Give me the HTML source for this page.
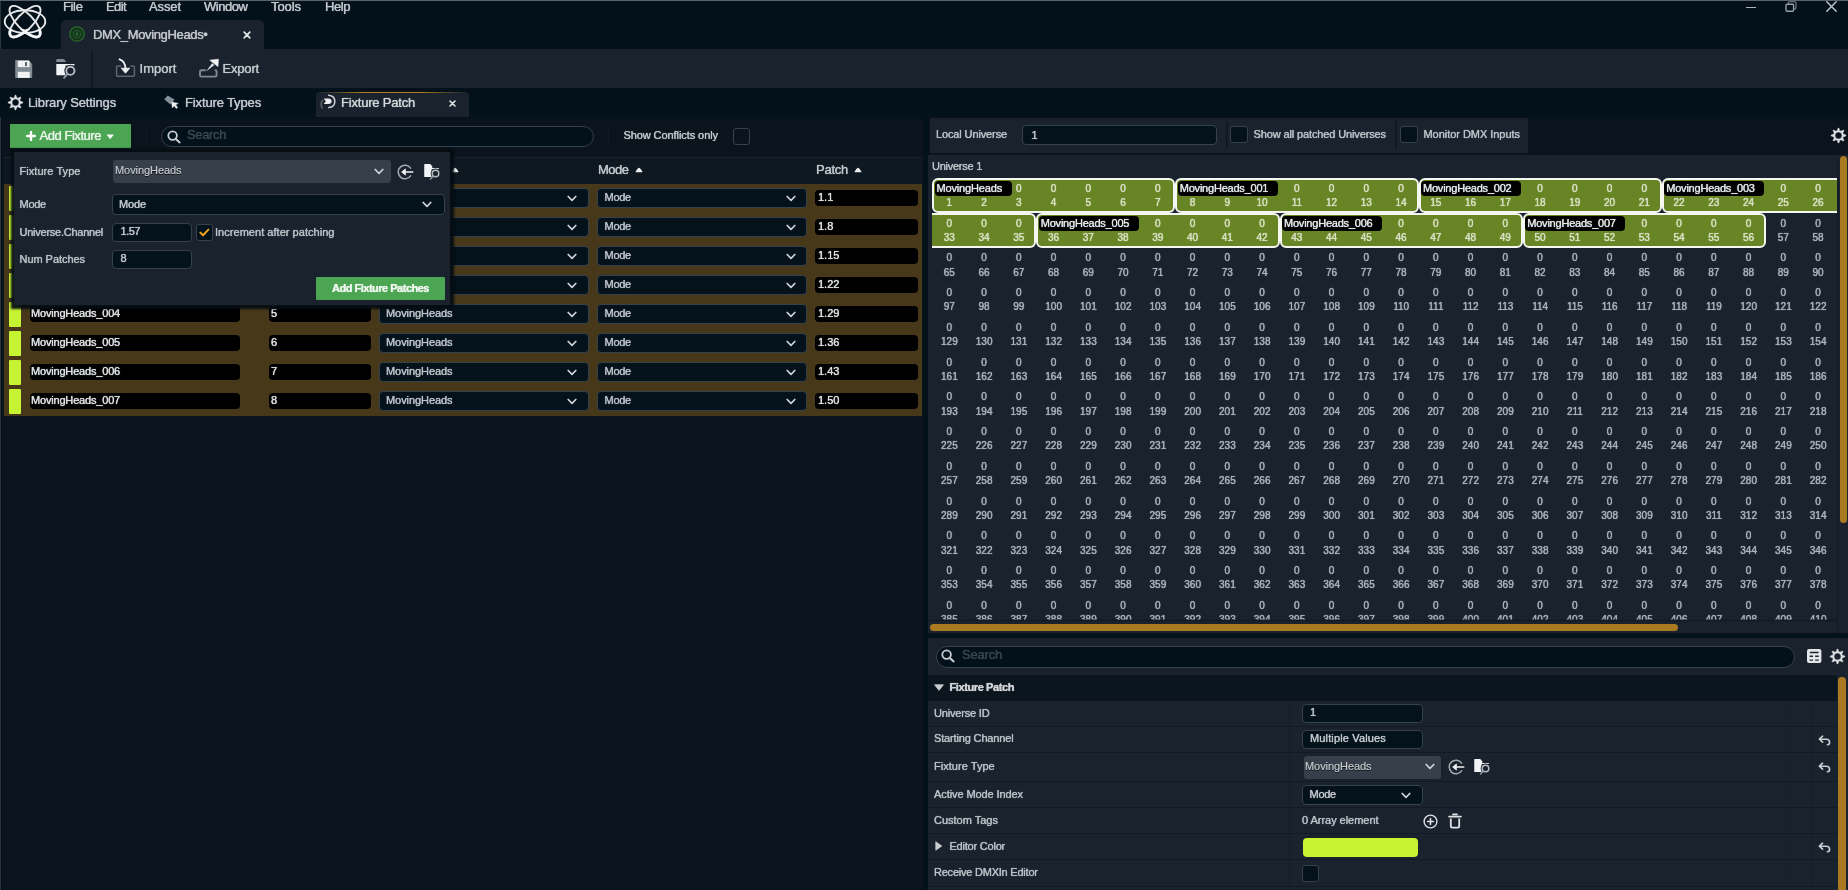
<!DOCTYPE html>
<html><head><meta charset="utf-8"><title>DMX_MovingHeads</title>
<style>
html,body{margin:0;padding:0;background:#03111a;}
body{width:1848px;height:890px;position:relative;overflow:hidden;font-family:'Liberation Sans',sans-serif;}
div,svg,span{position:absolute;}
.t{white-space:pre;line-height:1;-webkit-text-stroke:.15px currentColor;text-shadow:0 0 .9px currentColor;}
.g{width:30px;text-align:center;font-size:10px;line-height:1;letter-spacing:0;white-space:pre;-webkit-text-stroke:.2px currentColor;text-shadow:0 0 1px currentColor;}
#blur{left:0;top:0;width:1848px;height:890px;will-change:transform;}
</style></head><body><div id="blur">
<div style="left:0px;top:0px;width:1848px;height:49px;background:#03111a"></div><div style="left:0px;top:0px;width:1848px;height:1px;background:#5b646c"></div><div style="left:0px;top:1px;width:1px;height:889px;background:#2a343d"></div><svg style="left:0px;top:0px;" width="52" height="44" viewBox="0 0 52 44"><defs><clipPath id="lg"><rect x="0" y="29" width="52" height="15"/></clipPath></defs><g fill="none" stroke="#e6e8ea" stroke-width="1.9"><ellipse cx="25" cy="21.6" rx="20.3" ry="11.4"/><ellipse cx="25" cy="21.6" rx="20.5" ry="8" transform="rotate(45.5 25 21.6)"/><ellipse cx="25" cy="21.6" rx="20.5" ry="8" transform="rotate(-45.5 25 21.6)"/></g><g fill="none" stroke="#f4f5f6" stroke-width="2.9" clip-path="url(#lg)"><ellipse cx="25" cy="21.6" rx="20.2" ry="7.6" transform="rotate(45.5 25 21.6)"/><ellipse cx="25" cy="21.6" rx="20.2" ry="7.6" transform="rotate(-45.5 25 21.6)"/></g></svg><span class="t" style="left:63.00px;top:0.00px;font-size:13px;color:#c3c8cd;letter-spacing:-0.363px;">File</span><span class="t" style="left:106.00px;top:0.00px;font-size:13px;color:#c3c8cd;letter-spacing:-0.602px;">Edit</span><span class="t" style="left:149.00px;top:0.00px;font-size:13px;color:#c3c8cd;letter-spacing:-0.103px;">Asset</span><span class="t" style="left:204.00px;top:0.00px;font-size:13px;color:#c3c8cd;letter-spacing:-0.458px;">Window</span><span class="t" style="left:271.00px;top:0.00px;font-size:13px;color:#c3c8cd;letter-spacing:-0.072px;">Tools</span><span class="t" style="left:325.00px;top:0.00px;font-size:13px;color:#c3c8cd;letter-spacing:-0.438px;">Help</span><div style="left:61px;top:20px;width:203px;height:29px;background:#1a232d;border-radius:5px 5px 0 0"></div><svg style="left:69px;top:26px;" width="16" height="16" viewBox="0 0 16 16"><circle cx="8" cy="8" r="7.2" fill="#16341b" stroke="#276a2c" stroke-width="1.3"/><path d="M8 4.4 L10.4 10.4 L8 9 L5.6 10.4 Z" fill="#24602a"/><circle cx="8" cy="8" r="3.8" fill="none" stroke="#24602a" stroke-width=".9"/></svg><span class="t" style="left:93.00px;top:28.00px;font-size:13px;color:#c3c8cd;letter-spacing:-0.354px;">DMX_MovingHeads•</span><svg style="left:243px;top:31px;" width="8" height="8" viewBox="0 0 8 8"><path d="M1.2 1.2 L6.8 6.8 M6.8 1.2 L1.2 6.8" stroke="#e2e5e8" stroke-width="1.7" stroke-linecap="round"/></svg><div style="left:1745.8px;top:6.7px;width:10.2px;height:1.4px;background:#aab1b8"></div><svg style="left:1785px;top:1px;" width="12" height="11" viewBox="0 0 12 11"><path d="M3.2 3 V1.8 Q3.2 .8 4.2 .8 H10 Q11 .8 11 1.8 V7 Q11 8 10 8 H9" fill="none" stroke="#7d868e" stroke-width="1.1"/><rect x="1" y="3.2" width="7.6" height="7" rx="1.2" fill="none" stroke="#98a0a7" stroke-width="1.4"/></svg><svg style="left:1826.3px;top:1.2px;" width="11" height="11" viewBox="0 0 11 11"><path d="M.8 .8 L10.2 10.2 M10.2 .8 L.8 10.2" stroke="#bcc2c8" stroke-width="1.5" stroke-linecap="round"/></svg><div style="left:0px;top:49px;width:1848px;height:39px;background:#1a232d"></div><svg style="left:15px;top:59.5px;" width="18" height="18" viewBox="0 0 18 18"><path d="M.2 .9 Q.2 .1 1 .1 H13.4 L17.2 3.9 V17 Q17.2 17.9 16.4 17.9 H1 Q.2 17.9 .2 17 Z" fill="#808a93"/><rect x="2.8" y=".8" width="11.8" height="6.3" fill="#f0f2f4"/><rect x="10" y="1.9" width="2.1" height="4.4" rx=".8" fill="#59626b"/><rect x="2.8" y="11.8" width="12" height="6.1" fill="#f0f2f4"/></svg><svg style="left:56.2px;top:59.1px;" width="21.0" height="20.0" viewBox="0 0 21 20"><path d="M.3 .9 Q.3 .1 1.1 .1 H7.4 Q8 .1 8.5 .7 L10.3 3 V3 H.3 Z" fill="#828b94"/><path d="M.3 4.9 H18.5 V6.4 H9.6 V16.3 H1.1 Q.3 16.3 .3 15.5 Z" fill="#f2f4f6"/><circle cx="14.4" cy="11.8" r="6.1" fill="#1a232d"/><circle cx="14.4" cy="11.8" r="4.1" fill="none" stroke="#b4bac0" stroke-width="1.9"/><path d="M11.4 15.3 L8.1 18.9" stroke="#9aa2aa" stroke-width="1.7" stroke-linecap="round"/></svg><div style="left:91px;top:50px;width:2.2px;height:37px;background:#111a22"></div><svg style="left:115px;top:58px;" width="21" height="20" viewBox="0 0 21 20"><path d="M6.2 7.9 H2.6 Q1.6 7.9 1.6 8.9 V17.2 Q1.6 18.2 2.6 18.2 H18.4 Q19.4 18.2 19.4 17.2 V8.9 Q19.4 7.9 18.4 7.9 H15.4" fill="none" stroke="#5d6771" stroke-width="1.5"/><path d="M4.6 1.3 Q10.6 3.6 10.5 11" fill="none" stroke="#eef0f2" stroke-width="1.9" stroke-linecap="round"/><path d="M6.2 10.2 H14.8 L10.5 15.2 Z" fill="#eef0f2" stroke="#eef0f2" stroke-width=".8" stroke-linejoin="round"/></svg><span class="t" style="left:139.50px;top:62.00px;font-size:13px;color:#c3c8cd;letter-spacing:0.026px;">Import</span><svg style="left:198px;top:58px;" width="22" height="21" viewBox="0 0 22 21"><path d="M7 12.3 H3.4 Q2 12.3 2 13.7 V17.2 Q2 18.6 3.4 18.6 H17.2 Q18.6 18.6 18.6 17.2 V13.6 Q18.6 12.3 17.4 12.3" fill="none" stroke="#808a93" stroke-width="1.9" stroke-linecap="round"/><path d="M8 13.6 L14.2 5.2 L16.4 7 Z" fill="#dfe2e5"/><path d="M11.8 2.2 L20.4 1.2 L20 8.6 Z" fill="#f0f2f4" stroke="#f0f2f4" stroke-width=".6" stroke-linejoin="round"/></svg><span class="t" style="left:222.50px;top:62.00px;font-size:13px;color:#c3c8cd;letter-spacing:-0.180px;">Export</span><div style="left:0px;top:88px;width:1848px;height:28.5px;background:#03111a"></div><svg style="left:6.5px;top:94.3px;" width="17" height="17" viewBox="-8.5 -8.5 17 17"><path d="M-1.17 -5.07 L-0.39 -7.39 L0.39 -7.39 L1.17 -5.07 L1.88 -4.53 L2.76 -4.41 L4.95 -5.50 L5.50 -4.95 L4.41 -2.76 L4.53 -1.88 L5.07 -1.17 L7.39 -0.39 L7.39 0.39 L5.07 1.17 L4.53 1.88 L4.41 2.76 L5.50 4.95 L4.95 5.50 L2.76 4.41 L1.88 4.53 L1.17 5.07 L0.39 7.39 L-0.39 7.39 L-1.17 5.07 L-1.88 4.53 L-2.76 4.41 L-4.95 5.50 L-5.50 4.95 L-4.41 2.76 L-4.53 1.88 L-5.07 1.17 L-7.39 0.39 L-7.39 -0.39 L-5.07 -1.17 L-4.53 -1.88 L-4.41 -2.76 L-5.50 -4.95 L-4.95 -5.50 L-2.76 -4.41 L-1.88 -4.53 Z M3.5 0 A3.5 3.5 0 1 0 -3.5 0 A3.5 3.5 0 1 0 3.5 0 Z" fill="#dde0e3" fill-rule="evenodd" stroke="#dde0e3" stroke-width=".5" stroke-linejoin="round"/></svg><span class="t" style="left:28.00px;top:96.00px;font-size:13px;color:#c3c8cd;letter-spacing:-0.146px;">Library Settings</span><svg style="left:163px;top:94px;" width="17" height="16" viewBox="0 0 17 16"><path d="M4.8 1.4 L11.6 5.8 L7.4 10.6 L1.2 5.2 Z" fill="#858e96"/><path d="M8.6 8 L15.2 9.4 L12.6 10.8 L14.6 13.4 L13.2 14.4 L11.2 11.8 L9.4 14 Z" fill="#eef0f2" stroke="#eef0f2" stroke-width=".5" stroke-linejoin="round"/></svg><span class="t" style="left:185.00px;top:96.00px;font-size:13px;color:#c3c8cd;letter-spacing:-0.138px;">Fixture Types</span><div style="left:315.5px;top:92px;width:153px;height:24.5px;background:#1a232d;border-radius:4px 4px 0 0"></div><div style="left:318px;top:92px;width:148px;height:1.3px;background:linear-gradient(90deg,rgba(169,122,31,0),#a97a1f 30%,#a97a1f 70%,rgba(169,122,31,0));"></div><svg style="left:319px;top:93.5px;" width="18" height="16" viewBox="0 0 18 16"><path d="M3.8 6.2 Q.6 9.6 3.2 14" fill="none" stroke="#56606a" stroke-width="1.5" stroke-linecap="round"/><path d="M9.6 1.2 Q15.8 1.8 15.8 7.4 Q15.8 12.8 9.8 13.6" fill="none" stroke="#cdd1d5" stroke-width="1.5" stroke-linecap="round"/><path d="M4.8 4.6 L6.8 7.3 L4.8 10 H9.4 Q12.6 10 12.6 7.3 Q12.6 4.6 9.4 4.6 Z" fill="#eef0f2"/></svg><span class="t" style="left:341.00px;top:96.00px;font-size:13px;color:#d2d6da;letter-spacing:-0.200px;">Fixture Patch</span><svg style="left:448.5px;top:99.5px;" width="7" height="7" viewBox="0 0 7 7"><path d="M1 1 L6 6 M6 1 L1 6" stroke="#e2e5e8" stroke-width="1.6" stroke-linecap="round"/></svg><div style="left:2px;top:116.5px;width:921px;height:773.5px;background:linear-gradient(#03111a,#0b141c 3px)"></div><div style="left:10px;top:124px;width:121px;height:24px;background:#4ba552;border-radius:1px"></div><svg style="left:26px;top:131px;" width="10" height="10" viewBox="0 0 10 10"><path d="M5 1 V9 M1 5 H9" stroke="#fff" stroke-width="2.4" stroke-linecap="round"/></svg><span class="t" style="left:39.50px;top:129.00px;font-size:13px;color:#e9f4ea;letter-spacing:-0.453px;">Add Fixture</span><svg style="left:106px;top:134px;" width="8.4" height="5.4" viewBox="0 0 7 4.5"><path d="M1 .5 H6 Q6.7 .5 6.2 1.1 L4 3.7 Q3.5 4.2 3 3.7 L.8 1.1 Q.3 .5 1 .5 Z" fill="#f2f8f2"/></svg><div style="left:145.5px;top:129px;width:1px;height:15px;background:#121b23"></div><div style="left:161px;top:125.5px;width:432.5px;height:21.5px;background:#03111a;border:1px solid #37414c;border-radius:11px;box-sizing:border-box"></div><svg style="left:166.5px;top:129.5px;" width="14" height="14" viewBox="0 0 14 14"><circle cx="5.6" cy="5.6" r="4.3" fill="none" stroke="#c8ccd0" stroke-width="1.8"/><path d="M8.9 8.9 L12.6 12.4" stroke="#c8ccd0" stroke-width="2" stroke-linecap="round"/></svg><span class="t" style="left:187.00px;top:128.00px;font-size:13px;color:#3b4650;letter-spacing:-0.367px;">Search</span><div style="left:608px;top:129px;width:1px;height:15px;background:#121b23"></div><span class="t" style="left:623.40px;top:130.00px;font-size:11px;color:#c3c8cd;letter-spacing:-0.074px;">Show Conflicts only</span><div style="left:732.5px;top:128px;width:17.5px;height:17px;background:#0b141c;border:1px solid #37414c;border-radius:3px;box-sizing:border-box"></div><div style="left:4px;top:157px;width:918px;height:27px;background:#0e1820;border-top:1px solid #1a232d;box-sizing:border-box"></div><svg style="left:451px;top:167.4px;" width="8" height="5.6" viewBox="0 0 8 5.6"><path d="M.9 5.2 Q.2 5.2 .7 4.5 Q2.2 1.8 3.4 .9 Q4 .4 4.6 .9 Q5.8 1.8 7.3 4.5 Q7.8 5.2 7.1 5.2 Z" fill="#eceef0"/></svg><span class="t" style="left:598.00px;top:163.00px;font-size:13px;color:#c3c8cd;letter-spacing:-0.483px;">Mode</span><svg style="left:634.5px;top:167.4px;" width="8" height="5.6" viewBox="0 0 8 5.6"><path d="M.9 5.2 Q.2 5.2 .7 4.5 Q2.2 1.8 3.4 .9 Q4 .4 4.6 .9 Q5.8 1.8 7.3 4.5 Q7.8 5.2 7.1 5.2 Z" fill="#eceef0"/></svg><span class="t" style="left:816.00px;top:163.00px;font-size:13px;color:#c3c8cd;letter-spacing:-0.250px;">Patch</span><svg style="left:853.5px;top:167.4px;" width="8" height="5.6" viewBox="0 0 8 5.6"><path d="M.9 5.2 Q.2 5.2 .7 4.5 Q2.2 1.8 3.4 .9 Q4 .4 4.6 .9 Q5.8 1.8 7.3 4.5 Q7.8 5.2 7.1 5.2 Z" fill="#eceef0"/></svg><div style="left:4px;top:184px;width:918px;height:232px;background:#463819"></div><div style="left:9px;top:186px;width:12px;height:24.5px;background:#c6f432;border-radius:1px"></div><div style="left:29.5px;top:190px;width:210.5px;height:16px;background:#000;border-radius:4px"></div><div style="left:269px;top:190px;width:102px;height:16px;background:#000;border-radius:4px"></div><div style="left:379px;top:188px;width:210px;height:19.5px;background:#04121b;border:1px solid #37414c;border-radius:4px;box-sizing:border-box"></div><svg style="left:567px;top:194.5px;" width="10" height="7" viewBox="0 0 10 7"><path d="M1.2 1.5 L5 5.3 L8.8 1.5" fill="none" stroke="#d0d4d8" stroke-width="1.7" stroke-linecap="round" stroke-linejoin="round"/></svg><div style="left:597px;top:188px;width:210px;height:19.5px;background:#04121b;border:1px solid #37414c;border-radius:4px;box-sizing:border-box"></div><span class="t" style="left:604.50px;top:192.00px;font-size:11px;color:#bdc3c9;letter-spacing:-0.258px;">Mode</span><svg style="left:785.5px;top:194.5px;" width="10" height="7" viewBox="0 0 10 7"><path d="M1.2 1.5 L5 5.3 L8.8 1.5" fill="none" stroke="#d0d4d8" stroke-width="1.7" stroke-linecap="round" stroke-linejoin="round"/></svg><div style="left:815px;top:190px;width:102.5px;height:15.5px;background:#000;border-radius:4px"></div><span class="t" style="left:818.00px;top:192.00px;font-size:11px;color:#dfe2e5;">1.1</span><div style="left:9px;top:215px;width:12px;height:24.5px;background:#c6f432;border-radius:1px"></div><div style="left:29.5px;top:219px;width:210.5px;height:16px;background:#000;border-radius:4px"></div><div style="left:269px;top:219px;width:102px;height:16px;background:#000;border-radius:4px"></div><div style="left:379px;top:217px;width:210px;height:19.5px;background:#04121b;border:1px solid #37414c;border-radius:4px;box-sizing:border-box"></div><svg style="left:567px;top:223.5px;" width="10" height="7" viewBox="0 0 10 7"><path d="M1.2 1.5 L5 5.3 L8.8 1.5" fill="none" stroke="#d0d4d8" stroke-width="1.7" stroke-linecap="round" stroke-linejoin="round"/></svg><div style="left:597px;top:217px;width:210px;height:19.5px;background:#04121b;border:1px solid #37414c;border-radius:4px;box-sizing:border-box"></div><span class="t" style="left:604.50px;top:221.00px;font-size:11px;color:#bdc3c9;letter-spacing:-0.258px;">Mode</span><svg style="left:785.5px;top:223.5px;" width="10" height="7" viewBox="0 0 10 7"><path d="M1.2 1.5 L5 5.3 L8.8 1.5" fill="none" stroke="#d0d4d8" stroke-width="1.7" stroke-linecap="round" stroke-linejoin="round"/></svg><div style="left:815px;top:219px;width:102.5px;height:15.5px;background:#000;border-radius:4px"></div><span class="t" style="left:818.00px;top:221.00px;font-size:11px;color:#dfe2e5;">1.8</span><div style="left:9px;top:244px;width:12px;height:24.5px;background:#c6f432;border-radius:1px"></div><div style="left:29.5px;top:248px;width:210.5px;height:16px;background:#000;border-radius:4px"></div><div style="left:269px;top:248px;width:102px;height:16px;background:#000;border-radius:4px"></div><div style="left:379px;top:246px;width:210px;height:19.5px;background:#04121b;border:1px solid #37414c;border-radius:4px;box-sizing:border-box"></div><svg style="left:567px;top:252.5px;" width="10" height="7" viewBox="0 0 10 7"><path d="M1.2 1.5 L5 5.3 L8.8 1.5" fill="none" stroke="#d0d4d8" stroke-width="1.7" stroke-linecap="round" stroke-linejoin="round"/></svg><div style="left:597px;top:246px;width:210px;height:19.5px;background:#04121b;border:1px solid #37414c;border-radius:4px;box-sizing:border-box"></div><span class="t" style="left:604.50px;top:250.00px;font-size:11px;color:#bdc3c9;letter-spacing:-0.258px;">Mode</span><svg style="left:785.5px;top:252.5px;" width="10" height="7" viewBox="0 0 10 7"><path d="M1.2 1.5 L5 5.3 L8.8 1.5" fill="none" stroke="#d0d4d8" stroke-width="1.7" stroke-linecap="round" stroke-linejoin="round"/></svg><div style="left:815px;top:248px;width:102.5px;height:15.5px;background:#000;border-radius:4px"></div><span class="t" style="left:818.00px;top:250.00px;font-size:11px;color:#dfe2e5;">1.15</span><div style="left:9px;top:273px;width:12px;height:24.5px;background:#c6f432;border-radius:1px"></div><div style="left:29.5px;top:277px;width:210.5px;height:16px;background:#000;border-radius:4px"></div><div style="left:269px;top:277px;width:102px;height:16px;background:#000;border-radius:4px"></div><div style="left:379px;top:275px;width:210px;height:19.5px;background:#04121b;border:1px solid #37414c;border-radius:4px;box-sizing:border-box"></div><svg style="left:567px;top:281.5px;" width="10" height="7" viewBox="0 0 10 7"><path d="M1.2 1.5 L5 5.3 L8.8 1.5" fill="none" stroke="#d0d4d8" stroke-width="1.7" stroke-linecap="round" stroke-linejoin="round"/></svg><div style="left:597px;top:275px;width:210px;height:19.5px;background:#04121b;border:1px solid #37414c;border-radius:4px;box-sizing:border-box"></div><span class="t" style="left:604.50px;top:279.00px;font-size:11px;color:#bdc3c9;letter-spacing:-0.258px;">Mode</span><svg style="left:785.5px;top:281.5px;" width="10" height="7" viewBox="0 0 10 7"><path d="M1.2 1.5 L5 5.3 L8.8 1.5" fill="none" stroke="#d0d4d8" stroke-width="1.7" stroke-linecap="round" stroke-linejoin="round"/></svg><div style="left:815px;top:277px;width:102.5px;height:15.5px;background:#000;border-radius:4px"></div><span class="t" style="left:818.00px;top:279.00px;font-size:11px;color:#dfe2e5;">1.22</span><div style="left:9px;top:302px;width:12px;height:24.5px;background:#c6f432;border-radius:1px"></div><div style="left:29.5px;top:306px;width:210.5px;height:16px;background:#000;border-radius:4px"></div><span class="t" style="left:31.00px;top:308.00px;font-size:11px;color:#dfe2e5;letter-spacing:-0.182px;">MovingHeads_004</span><div style="left:269px;top:306px;width:102px;height:16px;background:#000;border-radius:4px"></div><span class="t" style="left:271.00px;top:308.00px;font-size:11px;color:#dfe2e5;">5</span><div style="left:379px;top:304px;width:210px;height:19.5px;background:#04121b;border:1px solid #37414c;border-radius:4px;box-sizing:border-box"></div><span class="t" style="left:386.00px;top:308.00px;font-size:11px;color:#bdc3c9;letter-spacing:-0.070px;">MovingHeads</span><svg style="left:567px;top:310.5px;" width="10" height="7" viewBox="0 0 10 7"><path d="M1.2 1.5 L5 5.3 L8.8 1.5" fill="none" stroke="#d0d4d8" stroke-width="1.7" stroke-linecap="round" stroke-linejoin="round"/></svg><div style="left:597px;top:304px;width:210px;height:19.5px;background:#04121b;border:1px solid #37414c;border-radius:4px;box-sizing:border-box"></div><span class="t" style="left:604.50px;top:308.00px;font-size:11px;color:#bdc3c9;letter-spacing:-0.258px;">Mode</span><svg style="left:785.5px;top:310.5px;" width="10" height="7" viewBox="0 0 10 7"><path d="M1.2 1.5 L5 5.3 L8.8 1.5" fill="none" stroke="#d0d4d8" stroke-width="1.7" stroke-linecap="round" stroke-linejoin="round"/></svg><div style="left:815px;top:306px;width:102.5px;height:15.5px;background:#000;border-radius:4px"></div><span class="t" style="left:818.00px;top:308.00px;font-size:11px;color:#dfe2e5;">1.29</span><div style="left:9px;top:331px;width:12px;height:24.5px;background:#c6f432;border-radius:1px"></div><div style="left:29.5px;top:335px;width:210.5px;height:16px;background:#000;border-radius:4px"></div><span class="t" style="left:31.00px;top:337.00px;font-size:11px;color:#dfe2e5;letter-spacing:-0.182px;">MovingHeads_005</span><div style="left:269px;top:335px;width:102px;height:16px;background:#000;border-radius:4px"></div><span class="t" style="left:271.00px;top:337.00px;font-size:11px;color:#dfe2e5;">6</span><div style="left:379px;top:333px;width:210px;height:19.5px;background:#04121b;border:1px solid #37414c;border-radius:4px;box-sizing:border-box"></div><span class="t" style="left:386.00px;top:337.00px;font-size:11px;color:#bdc3c9;letter-spacing:-0.070px;">MovingHeads</span><svg style="left:567px;top:339.5px;" width="10" height="7" viewBox="0 0 10 7"><path d="M1.2 1.5 L5 5.3 L8.8 1.5" fill="none" stroke="#d0d4d8" stroke-width="1.7" stroke-linecap="round" stroke-linejoin="round"/></svg><div style="left:597px;top:333px;width:210px;height:19.5px;background:#04121b;border:1px solid #37414c;border-radius:4px;box-sizing:border-box"></div><span class="t" style="left:604.50px;top:337.00px;font-size:11px;color:#bdc3c9;letter-spacing:-0.258px;">Mode</span><svg style="left:785.5px;top:339.5px;" width="10" height="7" viewBox="0 0 10 7"><path d="M1.2 1.5 L5 5.3 L8.8 1.5" fill="none" stroke="#d0d4d8" stroke-width="1.7" stroke-linecap="round" stroke-linejoin="round"/></svg><div style="left:815px;top:335px;width:102.5px;height:15.5px;background:#000;border-radius:4px"></div><span class="t" style="left:818.00px;top:337.00px;font-size:11px;color:#dfe2e5;">1.36</span><div style="left:9px;top:360px;width:12px;height:24.5px;background:#c6f432;border-radius:1px"></div><div style="left:29.5px;top:364px;width:210.5px;height:16px;background:#000;border-radius:4px"></div><span class="t" style="left:31.00px;top:366.00px;font-size:11px;color:#dfe2e5;letter-spacing:-0.182px;">MovingHeads_006</span><div style="left:269px;top:364px;width:102px;height:16px;background:#000;border-radius:4px"></div><span class="t" style="left:271.00px;top:366.00px;font-size:11px;color:#dfe2e5;">7</span><div style="left:379px;top:362px;width:210px;height:19.5px;background:#04121b;border:1px solid #37414c;border-radius:4px;box-sizing:border-box"></div><span class="t" style="left:386.00px;top:366.00px;font-size:11px;color:#bdc3c9;letter-spacing:-0.070px;">MovingHeads</span><svg style="left:567px;top:368.5px;" width="10" height="7" viewBox="0 0 10 7"><path d="M1.2 1.5 L5 5.3 L8.8 1.5" fill="none" stroke="#d0d4d8" stroke-width="1.7" stroke-linecap="round" stroke-linejoin="round"/></svg><div style="left:597px;top:362px;width:210px;height:19.5px;background:#04121b;border:1px solid #37414c;border-radius:4px;box-sizing:border-box"></div><span class="t" style="left:604.50px;top:366.00px;font-size:11px;color:#bdc3c9;letter-spacing:-0.258px;">Mode</span><svg style="left:785.5px;top:368.5px;" width="10" height="7" viewBox="0 0 10 7"><path d="M1.2 1.5 L5 5.3 L8.8 1.5" fill="none" stroke="#d0d4d8" stroke-width="1.7" stroke-linecap="round" stroke-linejoin="round"/></svg><div style="left:815px;top:364px;width:102.5px;height:15.5px;background:#000;border-radius:4px"></div><span class="t" style="left:818.00px;top:366.00px;font-size:11px;color:#dfe2e5;">1.43</span><div style="left:9px;top:389px;width:12px;height:24.5px;background:#c6f432;border-radius:1px"></div><div style="left:29.5px;top:393px;width:210.5px;height:16px;background:#000;border-radius:4px"></div><span class="t" style="left:31.00px;top:395.00px;font-size:11px;color:#dfe2e5;letter-spacing:-0.182px;">MovingHeads_007</span><div style="left:269px;top:393px;width:102px;height:16px;background:#000;border-radius:4px"></div><span class="t" style="left:271.00px;top:395.00px;font-size:11px;color:#dfe2e5;">8</span><div style="left:379px;top:391px;width:210px;height:19.5px;background:#04121b;border:1px solid #37414c;border-radius:4px;box-sizing:border-box"></div><span class="t" style="left:386.00px;top:395.00px;font-size:11px;color:#bdc3c9;letter-spacing:-0.070px;">MovingHeads</span><svg style="left:567px;top:397.5px;" width="10" height="7" viewBox="0 0 10 7"><path d="M1.2 1.5 L5 5.3 L8.8 1.5" fill="none" stroke="#d0d4d8" stroke-width="1.7" stroke-linecap="round" stroke-linejoin="round"/></svg><div style="left:597px;top:391px;width:210px;height:19.5px;background:#04121b;border:1px solid #37414c;border-radius:4px;box-sizing:border-box"></div><span class="t" style="left:604.50px;top:395.00px;font-size:11px;color:#bdc3c9;letter-spacing:-0.258px;">Mode</span><svg style="left:785.5px;top:397.5px;" width="10" height="7" viewBox="0 0 10 7"><path d="M1.2 1.5 L5 5.3 L8.8 1.5" fill="none" stroke="#d0d4d8" stroke-width="1.7" stroke-linecap="round" stroke-linejoin="round"/></svg><div style="left:815px;top:393px;width:102.5px;height:15.5px;background:#000;border-radius:4px"></div><span class="t" style="left:818.00px;top:395.00px;font-size:11px;color:#dfe2e5;">1.50</span><div style="left:14px;top:151.5px;width:436px;height:153.5px;background:#1a232d;box-shadow:0 0 2px 3.5px rgba(5,13,19,.94)"></div><span class="t" style="left:19.50px;top:166.00px;font-size:11px;color:#bcc2c8;letter-spacing:0.056px;">Fixture Type</span><div style="left:113px;top:160px;width:277.5px;height:23px;background:#363f4a;border-radius:3px"></div><span class="t" style="left:115.00px;top:165.00px;font-size:11px;color:#c9cdd1;letter-spacing:-0.070px;text-shadow:0 1px 0 #0a0f14">MovingHeads</span><svg style="left:374px;top:168.0px;" width="10" height="7" viewBox="0 0 10 7"><path d="M1.2 1.5 L5 5.3 L8.8 1.5" fill="none" stroke="#d0d4d8" stroke-width="1.7" stroke-linecap="round" stroke-linejoin="round"/></svg><svg style="left:397px;top:164px;" width="17" height="16" viewBox="0 0 17 16"><path d="M13.6 4.1 A6.8 6.8 0 1 0 13.6 11.9" fill="none" stroke="#a3abb3" stroke-width="1.5" stroke-linecap="round"/><path d="M15.6 8 H7.5" fill="none" stroke="#f0f2f4" stroke-width="1.7" stroke-linecap="round"/><path d="M4.6 8 L8.4 4.9 V11.1 Z" fill="#f0f2f4" stroke="#f0f2f4" stroke-width=".8" stroke-linejoin="round"/></svg><svg style="left:424.2px;top:163.6px;" width="16.8" height="16.0" viewBox="0 0 21 20"><path d="M.3 .9 Q.3 .1 1.1 .1 H7.4 Q8 .1 8.5 .7 L10.3 3 V5 H.3 Z" fill="#f2f4f6"/><path d="M.3 4.9 H18.5 V6.4 H9.6 V16.3 H1.1 Q.3 16.3 .3 15.5 Z" fill="#f2f4f6"/><circle cx="14.4" cy="11.8" r="6.1" fill="#1a232d"/><circle cx="14.4" cy="11.8" r="4.1" fill="none" stroke="#b4bac0" stroke-width="1.9"/><path d="M11.4 15.3 L8.1 18.9" stroke="#9aa2aa" stroke-width="1.7" stroke-linecap="round"/></svg><span class="t" style="left:19.50px;top:199.00px;font-size:11px;color:#bcc2c8;letter-spacing:-0.258px;">Mode</span><div style="left:112px;top:194px;width:332.5px;height:20.5px;background:#04121b;border:1px solid #37414c;border-radius:4px;box-sizing:border-box"></div><span class="t" style="left:119.00px;top:199.00px;font-size:11px;color:#c3c8cd;letter-spacing:-0.133px;">Mode</span><svg style="left:422px;top:201.0px;" width="10" height="7" viewBox="0 0 10 7"><path d="M1.2 1.5 L5 5.3 L8.8 1.5" fill="none" stroke="#d0d4d8" stroke-width="1.7" stroke-linecap="round" stroke-linejoin="round"/></svg><span class="t" style="left:19.50px;top:227.00px;font-size:11px;color:#bcc2c8;letter-spacing:-0.246px;">Universe.Channel</span><div style="left:112px;top:223px;width:80px;height:18.5px;background:#04121b;border:1px solid #37414c;border-radius:4px;box-sizing:border-box"></div><span class="t" style="left:120.50px;top:226.00px;font-size:11px;color:#c3c8cd;letter-spacing:-0.480px;">1.57</span><div style="left:196px;top:224px;width:17px;height:17px;background:#04121b;border:1px solid #37414c;border-radius:3px;box-sizing:border-box"></div><svg style="left:199px;top:228px;" width="11" height="9" viewBox="0 0 11 9"><path d="M1.4 4.6 L4 7.2 L9.4 1.6" fill="none" stroke="#f2a31c" stroke-width="2" stroke-linecap="round" stroke-linejoin="round"/></svg><span class="t" style="left:215.00px;top:227.00px;font-size:11px;color:#bcc2c8;letter-spacing:0.036px;">Increment after patching</span><span class="t" style="left:19.50px;top:254.00px;font-size:11px;color:#bcc2c8;letter-spacing:-0.048px;">Num Patches</span><div style="left:112px;top:250px;width:80px;height:19px;background:#04121b;border:1px solid #37414c;border-radius:4px;box-sizing:border-box"></div><span class="t" style="left:120.50px;top:253.00px;font-size:11px;color:#c3c8cd;">8</span><div style="left:316px;top:277px;width:128.5px;height:22.5px;background:#4ba552;border-radius:1px"></div><span class="t" style="left:332.00px;top:283.00px;font-size:11px;color:#f0f7f0;font-weight:700;letter-spacing:-0.493px;">Add Fixture Patches</span><div style="left:923px;top:116.5px;width:925px;height:773.5px;background:#03111a"></div><div style="left:929px;top:116.5px;width:919px;height:39px;background:linear-gradient(#03111a,#0b141c 3px)"></div><div style="left:930px;top:118px;width:598px;height:34.5px;background:#1a232d"></div><span class="t" style="left:936.00px;top:129.00px;font-size:11px;color:#bcc2c8;letter-spacing:-0.126px;">Local Universe</span><div style="left:1022px;top:124.5px;width:194.5px;height:20px;background:#04121b;border:1px solid #37414c;border-radius:4px;box-sizing:border-box"></div><span class="t" style="left:1031.50px;top:130.00px;font-size:11px;color:#c3c8cd;">1</span><div style="left:1226px;top:121px;width:2px;height:28px;background:#101820"></div><div style="left:1230px;top:126px;width:18px;height:17px;background:#04121b;border:1px solid #37414c;border-radius:3px;box-sizing:border-box"></div><span class="t" style="left:1253.50px;top:129.00px;font-size:11px;color:#bcc2c8;letter-spacing:-0.125px;">Show all patched Universes</span><div style="left:1395.3px;top:121px;width:2px;height:28px;background:#101820"></div><div style="left:1400px;top:126px;width:18px;height:17px;background:#04121b;border:1px solid #37414c;border-radius:3px;box-sizing:border-box"></div><span class="t" style="left:1423.50px;top:129.00px;font-size:11px;color:#bcc2c8;letter-spacing:-0.039px;">Monitor DMX Inputs</span><svg style="left:1829.5px;top:127.0px;" width="17" height="17" viewBox="-8.5 -8.5 17 17"><path d="M-1.17 -5.07 L-0.39 -7.39 L0.39 -7.39 L1.17 -5.07 L1.88 -4.53 L2.76 -4.41 L4.95 -5.50 L5.50 -4.95 L4.41 -2.76 L4.53 -1.88 L5.07 -1.17 L7.39 -0.39 L7.39 0.39 L5.07 1.17 L4.53 1.88 L4.41 2.76 L5.50 4.95 L4.95 5.50 L2.76 4.41 L1.88 4.53 L1.17 5.07 L0.39 7.39 L-0.39 7.39 L-1.17 5.07 L-1.88 4.53 L-2.76 4.41 L-4.95 5.50 L-5.50 4.95 L-4.41 2.76 L-4.53 1.88 L-5.07 1.17 L-7.39 0.39 L-7.39 -0.39 L-5.07 -1.17 L-4.53 -1.88 L-4.41 -2.76 L-5.50 -4.95 L-4.95 -5.50 L-2.76 -4.41 L-1.88 -4.53 Z M3.5 0 A3.5 3.5 0 1 0 -3.5 0 A3.5 3.5 0 1 0 3.5 0 Z" fill="#dde0e3" fill-rule="evenodd" stroke="#dde0e3" stroke-width=".5" stroke-linejoin="round"/></svg><div style="left:928px;top:155px;width:920px;height:478px;background:#1a232d"></div><div style="left:1836.5px;top:155px;width:2px;height:478px;background:linear-gradient(90deg,#121a22,#1a232d)"></div><span class="t" style="left:932.00px;top:161.00px;font-size:11px;color:#bcc2c8;letter-spacing:-0.258px;">Universe 1</span><div style="left:932px;top:178px;width:904.5px;height:442px;overflow:hidden"><div style="left:0.0px;top:0.0px;width:243.25px;height:34.75px;background:#688525;border:solid #f4f6f0;border-width:2px 2px 2px 2px;border-radius:6px 6px 6px 6px;box-sizing:border-box"></div><div style="left:243.25px;top:0.0px;width:243.25px;height:34.75px;background:#688525;border:solid #f4f6f0;border-width:2px 2px 2px 2px;border-radius:6px 6px 6px 6px;box-sizing:border-box"></div><div style="left:486.5px;top:0.0px;width:243.25px;height:34.75px;background:#688525;border:solid #f4f6f0;border-width:2px 2px 2px 2px;border-radius:6px 6px 6px 6px;box-sizing:border-box"></div><div style="left:729.75px;top:0.0px;width:243.25px;height:34.75px;background:#688525;border:solid #f4f6f0;border-width:2px 2px 2px 2px;border-radius:6px 6px 6px 6px;box-sizing:border-box"></div><div style="left:973.0px;top:0.0px;width:139.0px;height:34.75px;background:#688525;border:solid #f4f6f0;border-width:2px 0 2px 2px;border-radius:6px 0 0 6px;box-sizing:border-box"></div><div style="left:0.0px;top:34.75px;width:104.25px;height:34.75px;background:#688525;border:solid #f4f6f0;border-width:2px 2px 2px 0;border-radius:0 6px 6px 0;box-sizing:border-box"></div><div style="left:104.25px;top:34.75px;width:243.25px;height:34.75px;background:#688525;border:solid #f4f6f0;border-width:2px 2px 2px 2px;border-radius:6px 6px 6px 6px;box-sizing:border-box"></div><div style="left:347.5px;top:34.75px;width:243.25px;height:34.75px;background:#688525;border:solid #f4f6f0;border-width:2px 2px 2px 2px;border-radius:6px 6px 6px 6px;box-sizing:border-box"></div><div style="left:590.75px;top:34.75px;width:243.25px;height:34.75px;background:#688525;border:solid #f4f6f0;border-width:2px 2px 2px 2px;border-radius:6px 6px 6px 6px;box-sizing:border-box"></div><span class="g" style="left:2.38px;top:20px;color:#d9e1c4">1</span><span class="g" style="left:37.12px;top:20px;color:#d9e1c4">2</span><span class="g" style="left:71.88px;top:6px;color:#d9e1c4">0</span><span class="g" style="left:71.88px;top:20px;color:#d9e1c4">3</span><span class="g" style="left:106.62px;top:6px;color:#d9e1c4">0</span><span class="g" style="left:106.62px;top:20px;color:#d9e1c4">4</span><span class="g" style="left:141.38px;top:6px;color:#d9e1c4">0</span><span class="g" style="left:141.38px;top:20px;color:#d9e1c4">5</span><span class="g" style="left:176.12px;top:6px;color:#d9e1c4">0</span><span class="g" style="left:176.12px;top:20px;color:#d9e1c4">6</span><span class="g" style="left:210.88px;top:6px;color:#d9e1c4">0</span><span class="g" style="left:210.88px;top:20px;color:#d9e1c4">7</span><span class="g" style="left:245.62px;top:20px;color:#d9e1c4">8</span><span class="g" style="left:280.38px;top:20px;color:#d9e1c4">9</span><span class="g" style="left:315.12px;top:20px;color:#d9e1c4">10</span><span class="g" style="left:349.88px;top:6px;color:#d9e1c4">0</span><span class="g" style="left:349.88px;top:20px;color:#d9e1c4">11</span><span class="g" style="left:384.62px;top:6px;color:#d9e1c4">0</span><span class="g" style="left:384.62px;top:20px;color:#d9e1c4">12</span><span class="g" style="left:419.38px;top:6px;color:#d9e1c4">0</span><span class="g" style="left:419.38px;top:20px;color:#d9e1c4">13</span><span class="g" style="left:454.12px;top:6px;color:#d9e1c4">0</span><span class="g" style="left:454.12px;top:20px;color:#d9e1c4">14</span><span class="g" style="left:488.88px;top:20px;color:#d9e1c4">15</span><span class="g" style="left:523.62px;top:20px;color:#d9e1c4">16</span><span class="g" style="left:558.38px;top:20px;color:#d9e1c4">17</span><span class="g" style="left:593.12px;top:6px;color:#d9e1c4">0</span><span class="g" style="left:593.12px;top:20px;color:#d9e1c4">18</span><span class="g" style="left:627.88px;top:6px;color:#d9e1c4">0</span><span class="g" style="left:627.88px;top:20px;color:#d9e1c4">19</span><span class="g" style="left:662.62px;top:6px;color:#d9e1c4">0</span><span class="g" style="left:662.62px;top:20px;color:#d9e1c4">20</span><span class="g" style="left:697.38px;top:6px;color:#d9e1c4">0</span><span class="g" style="left:697.38px;top:20px;color:#d9e1c4">21</span><span class="g" style="left:732.12px;top:20px;color:#d9e1c4">22</span><span class="g" style="left:766.88px;top:20px;color:#d9e1c4">23</span><span class="g" style="left:801.62px;top:20px;color:#d9e1c4">24</span><span class="g" style="left:836.38px;top:6px;color:#d9e1c4">0</span><span class="g" style="left:836.38px;top:20px;color:#d9e1c4">25</span><span class="g" style="left:871.12px;top:6px;color:#d9e1c4">0</span><span class="g" style="left:871.12px;top:20px;color:#d9e1c4">26</span><span class="g" style="left:905.88px;top:6px;color:#d9e1c4">0</span><span class="g" style="left:905.88px;top:20px;color:#d9e1c4">27</span><span class="g" style="left:2.38px;top:41px;color:#d9e1c4">0</span><span class="g" style="left:2.38px;top:55px;color:#d9e1c4">33</span><span class="g" style="left:37.12px;top:41px;color:#d9e1c4">0</span><span class="g" style="left:37.12px;top:55px;color:#d9e1c4">34</span><span class="g" style="left:71.88px;top:41px;color:#d9e1c4">0</span><span class="g" style="left:71.88px;top:55px;color:#d9e1c4">35</span><span class="g" style="left:106.62px;top:55px;color:#d9e1c4">36</span><span class="g" style="left:141.38px;top:55px;color:#d9e1c4">37</span><span class="g" style="left:176.12px;top:55px;color:#d9e1c4">38</span><span class="g" style="left:210.88px;top:41px;color:#d9e1c4">0</span><span class="g" style="left:210.88px;top:55px;color:#d9e1c4">39</span><span class="g" style="left:245.62px;top:41px;color:#d9e1c4">0</span><span class="g" style="left:245.62px;top:55px;color:#d9e1c4">40</span><span class="g" style="left:280.38px;top:41px;color:#d9e1c4">0</span><span class="g" style="left:280.38px;top:55px;color:#d9e1c4">41</span><span class="g" style="left:315.12px;top:41px;color:#d9e1c4">0</span><span class="g" style="left:315.12px;top:55px;color:#d9e1c4">42</span><span class="g" style="left:349.88px;top:55px;color:#d9e1c4">43</span><span class="g" style="left:384.62px;top:55px;color:#d9e1c4">44</span><span class="g" style="left:419.38px;top:55px;color:#d9e1c4">45</span><span class="g" style="left:454.12px;top:41px;color:#d9e1c4">0</span><span class="g" style="left:454.12px;top:55px;color:#d9e1c4">46</span><span class="g" style="left:488.88px;top:41px;color:#d9e1c4">0</span><span class="g" style="left:488.88px;top:55px;color:#d9e1c4">47</span><span class="g" style="left:523.62px;top:41px;color:#d9e1c4">0</span><span class="g" style="left:523.62px;top:55px;color:#d9e1c4">48</span><span class="g" style="left:558.38px;top:41px;color:#d9e1c4">0</span><span class="g" style="left:558.38px;top:55px;color:#d9e1c4">49</span><span class="g" style="left:593.12px;top:55px;color:#d9e1c4">50</span><span class="g" style="left:627.88px;top:55px;color:#d9e1c4">51</span><span class="g" style="left:662.62px;top:55px;color:#d9e1c4">52</span><span class="g" style="left:697.38px;top:41px;color:#d9e1c4">0</span><span class="g" style="left:697.38px;top:55px;color:#d9e1c4">53</span><span class="g" style="left:732.12px;top:41px;color:#d9e1c4">0</span><span class="g" style="left:732.12px;top:55px;color:#d9e1c4">54</span><span class="g" style="left:766.88px;top:41px;color:#d9e1c4">0</span><span class="g" style="left:766.88px;top:55px;color:#d9e1c4">55</span><span class="g" style="left:801.62px;top:41px;color:#d9e1c4">0</span><span class="g" style="left:801.62px;top:55px;color:#d9e1c4">56</span><span class="g" style="left:836.38px;top:41px;color:#abb2ba">0</span><span class="g" style="left:836.38px;top:55px;color:#abb2ba">57</span><span class="g" style="left:871.12px;top:41px;color:#abb2ba">0</span><span class="g" style="left:871.12px;top:55px;color:#abb2ba">58</span><span class="g" style="left:905.88px;top:41px;color:#abb2ba">0</span><span class="g" style="left:905.88px;top:55px;color:#abb2ba">59</span><span class="g" style="left:2.38px;top:75px;color:#abb2ba">0</span><span class="g" style="left:2.38px;top:90px;color:#abb2ba">65</span><span class="g" style="left:37.12px;top:75px;color:#abb2ba">0</span><span class="g" style="left:37.12px;top:90px;color:#abb2ba">66</span><span class="g" style="left:71.88px;top:75px;color:#abb2ba">0</span><span class="g" style="left:71.88px;top:90px;color:#abb2ba">67</span><span class="g" style="left:106.62px;top:75px;color:#abb2ba">0</span><span class="g" style="left:106.62px;top:90px;color:#abb2ba">68</span><span class="g" style="left:141.38px;top:75px;color:#abb2ba">0</span><span class="g" style="left:141.38px;top:90px;color:#abb2ba">69</span><span class="g" style="left:176.12px;top:75px;color:#abb2ba">0</span><span class="g" style="left:176.12px;top:90px;color:#abb2ba">70</span><span class="g" style="left:210.88px;top:75px;color:#abb2ba">0</span><span class="g" style="left:210.88px;top:90px;color:#abb2ba">71</span><span class="g" style="left:245.62px;top:75px;color:#abb2ba">0</span><span class="g" style="left:245.62px;top:90px;color:#abb2ba">72</span><span class="g" style="left:280.38px;top:75px;color:#abb2ba">0</span><span class="g" style="left:280.38px;top:90px;color:#abb2ba">73</span><span class="g" style="left:315.12px;top:75px;color:#abb2ba">0</span><span class="g" style="left:315.12px;top:90px;color:#abb2ba">74</span><span class="g" style="left:349.88px;top:75px;color:#abb2ba">0</span><span class="g" style="left:349.88px;top:90px;color:#abb2ba">75</span><span class="g" style="left:384.62px;top:75px;color:#abb2ba">0</span><span class="g" style="left:384.62px;top:90px;color:#abb2ba">76</span><span class="g" style="left:419.38px;top:75px;color:#abb2ba">0</span><span class="g" style="left:419.38px;top:90px;color:#abb2ba">77</span><span class="g" style="left:454.12px;top:75px;color:#abb2ba">0</span><span class="g" style="left:454.12px;top:90px;color:#abb2ba">78</span><span class="g" style="left:488.88px;top:75px;color:#abb2ba">0</span><span class="g" style="left:488.88px;top:90px;color:#abb2ba">79</span><span class="g" style="left:523.62px;top:75px;color:#abb2ba">0</span><span class="g" style="left:523.62px;top:90px;color:#abb2ba">80</span><span class="g" style="left:558.38px;top:75px;color:#abb2ba">0</span><span class="g" style="left:558.38px;top:90px;color:#abb2ba">81</span><span class="g" style="left:593.12px;top:75px;color:#abb2ba">0</span><span class="g" style="left:593.12px;top:90px;color:#abb2ba">82</span><span class="g" style="left:627.88px;top:75px;color:#abb2ba">0</span><span class="g" style="left:627.88px;top:90px;color:#abb2ba">83</span><span class="g" style="left:662.62px;top:75px;color:#abb2ba">0</span><span class="g" style="left:662.62px;top:90px;color:#abb2ba">84</span><span class="g" style="left:697.38px;top:75px;color:#abb2ba">0</span><span class="g" style="left:697.38px;top:90px;color:#abb2ba">85</span><span class="g" style="left:732.12px;top:75px;color:#abb2ba">0</span><span class="g" style="left:732.12px;top:90px;color:#abb2ba">86</span><span class="g" style="left:766.88px;top:75px;color:#abb2ba">0</span><span class="g" style="left:766.88px;top:90px;color:#abb2ba">87</span><span class="g" style="left:801.62px;top:75px;color:#abb2ba">0</span><span class="g" style="left:801.62px;top:90px;color:#abb2ba">88</span><span class="g" style="left:836.38px;top:75px;color:#abb2ba">0</span><span class="g" style="left:836.38px;top:90px;color:#abb2ba">89</span><span class="g" style="left:871.12px;top:75px;color:#abb2ba">0</span><span class="g" style="left:871.12px;top:90px;color:#abb2ba">90</span><span class="g" style="left:905.88px;top:75px;color:#abb2ba">0</span><span class="g" style="left:905.88px;top:90px;color:#abb2ba">91</span><span class="g" style="left:2.38px;top:110px;color:#abb2ba">0</span><span class="g" style="left:2.38px;top:124px;color:#abb2ba">97</span><span class="g" style="left:37.12px;top:110px;color:#abb2ba">0</span><span class="g" style="left:37.12px;top:124px;color:#abb2ba">98</span><span class="g" style="left:71.88px;top:110px;color:#abb2ba">0</span><span class="g" style="left:71.88px;top:124px;color:#abb2ba">99</span><span class="g" style="left:106.62px;top:110px;color:#abb2ba">0</span><span class="g" style="left:106.62px;top:124px;color:#abb2ba">100</span><span class="g" style="left:141.38px;top:110px;color:#abb2ba">0</span><span class="g" style="left:141.38px;top:124px;color:#abb2ba">101</span><span class="g" style="left:176.12px;top:110px;color:#abb2ba">0</span><span class="g" style="left:176.12px;top:124px;color:#abb2ba">102</span><span class="g" style="left:210.88px;top:110px;color:#abb2ba">0</span><span class="g" style="left:210.88px;top:124px;color:#abb2ba">103</span><span class="g" style="left:245.62px;top:110px;color:#abb2ba">0</span><span class="g" style="left:245.62px;top:124px;color:#abb2ba">104</span><span class="g" style="left:280.38px;top:110px;color:#abb2ba">0</span><span class="g" style="left:280.38px;top:124px;color:#abb2ba">105</span><span class="g" style="left:315.12px;top:110px;color:#abb2ba">0</span><span class="g" style="left:315.12px;top:124px;color:#abb2ba">106</span><span class="g" style="left:349.88px;top:110px;color:#abb2ba">0</span><span class="g" style="left:349.88px;top:124px;color:#abb2ba">107</span><span class="g" style="left:384.62px;top:110px;color:#abb2ba">0</span><span class="g" style="left:384.62px;top:124px;color:#abb2ba">108</span><span class="g" style="left:419.38px;top:110px;color:#abb2ba">0</span><span class="g" style="left:419.38px;top:124px;color:#abb2ba">109</span><span class="g" style="left:454.12px;top:110px;color:#abb2ba">0</span><span class="g" style="left:454.12px;top:124px;color:#abb2ba">110</span><span class="g" style="left:488.88px;top:110px;color:#abb2ba">0</span><span class="g" style="left:488.88px;top:124px;color:#abb2ba">111</span><span class="g" style="left:523.62px;top:110px;color:#abb2ba">0</span><span class="g" style="left:523.62px;top:124px;color:#abb2ba">112</span><span class="g" style="left:558.38px;top:110px;color:#abb2ba">0</span><span class="g" style="left:558.38px;top:124px;color:#abb2ba">113</span><span class="g" style="left:593.12px;top:110px;color:#abb2ba">0</span><span class="g" style="left:593.12px;top:124px;color:#abb2ba">114</span><span class="g" style="left:627.88px;top:110px;color:#abb2ba">0</span><span class="g" style="left:627.88px;top:124px;color:#abb2ba">115</span><span class="g" style="left:662.62px;top:110px;color:#abb2ba">0</span><span class="g" style="left:662.62px;top:124px;color:#abb2ba">116</span><span class="g" style="left:697.38px;top:110px;color:#abb2ba">0</span><span class="g" style="left:697.38px;top:124px;color:#abb2ba">117</span><span class="g" style="left:732.12px;top:110px;color:#abb2ba">0</span><span class="g" style="left:732.12px;top:124px;color:#abb2ba">118</span><span class="g" style="left:766.88px;top:110px;color:#abb2ba">0</span><span class="g" style="left:766.88px;top:124px;color:#abb2ba">119</span><span class="g" style="left:801.62px;top:110px;color:#abb2ba">0</span><span class="g" style="left:801.62px;top:124px;color:#abb2ba">120</span><span class="g" style="left:836.38px;top:110px;color:#abb2ba">0</span><span class="g" style="left:836.38px;top:124px;color:#abb2ba">121</span><span class="g" style="left:871.12px;top:110px;color:#abb2ba">0</span><span class="g" style="left:871.12px;top:124px;color:#abb2ba">122</span><span class="g" style="left:905.88px;top:110px;color:#abb2ba">0</span><span class="g" style="left:905.88px;top:124px;color:#abb2ba">123</span><span class="g" style="left:2.38px;top:145px;color:#abb2ba">0</span><span class="g" style="left:2.38px;top:159px;color:#abb2ba">129</span><span class="g" style="left:37.12px;top:145px;color:#abb2ba">0</span><span class="g" style="left:37.12px;top:159px;color:#abb2ba">130</span><span class="g" style="left:71.88px;top:145px;color:#abb2ba">0</span><span class="g" style="left:71.88px;top:159px;color:#abb2ba">131</span><span class="g" style="left:106.62px;top:145px;color:#abb2ba">0</span><span class="g" style="left:106.62px;top:159px;color:#abb2ba">132</span><span class="g" style="left:141.38px;top:145px;color:#abb2ba">0</span><span class="g" style="left:141.38px;top:159px;color:#abb2ba">133</span><span class="g" style="left:176.12px;top:145px;color:#abb2ba">0</span><span class="g" style="left:176.12px;top:159px;color:#abb2ba">134</span><span class="g" style="left:210.88px;top:145px;color:#abb2ba">0</span><span class="g" style="left:210.88px;top:159px;color:#abb2ba">135</span><span class="g" style="left:245.62px;top:145px;color:#abb2ba">0</span><span class="g" style="left:245.62px;top:159px;color:#abb2ba">136</span><span class="g" style="left:280.38px;top:145px;color:#abb2ba">0</span><span class="g" style="left:280.38px;top:159px;color:#abb2ba">137</span><span class="g" style="left:315.12px;top:145px;color:#abb2ba">0</span><span class="g" style="left:315.12px;top:159px;color:#abb2ba">138</span><span class="g" style="left:349.88px;top:145px;color:#abb2ba">0</span><span class="g" style="left:349.88px;top:159px;color:#abb2ba">139</span><span class="g" style="left:384.62px;top:145px;color:#abb2ba">0</span><span class="g" style="left:384.62px;top:159px;color:#abb2ba">140</span><span class="g" style="left:419.38px;top:145px;color:#abb2ba">0</span><span class="g" style="left:419.38px;top:159px;color:#abb2ba">141</span><span class="g" style="left:454.12px;top:145px;color:#abb2ba">0</span><span class="g" style="left:454.12px;top:159px;color:#abb2ba">142</span><span class="g" style="left:488.88px;top:145px;color:#abb2ba">0</span><span class="g" style="left:488.88px;top:159px;color:#abb2ba">143</span><span class="g" style="left:523.62px;top:145px;color:#abb2ba">0</span><span class="g" style="left:523.62px;top:159px;color:#abb2ba">144</span><span class="g" style="left:558.38px;top:145px;color:#abb2ba">0</span><span class="g" style="left:558.38px;top:159px;color:#abb2ba">145</span><span class="g" style="left:593.12px;top:145px;color:#abb2ba">0</span><span class="g" style="left:593.12px;top:159px;color:#abb2ba">146</span><span class="g" style="left:627.88px;top:145px;color:#abb2ba">0</span><span class="g" style="left:627.88px;top:159px;color:#abb2ba">147</span><span class="g" style="left:662.62px;top:145px;color:#abb2ba">0</span><span class="g" style="left:662.62px;top:159px;color:#abb2ba">148</span><span class="g" style="left:697.38px;top:145px;color:#abb2ba">0</span><span class="g" style="left:697.38px;top:159px;color:#abb2ba">149</span><span class="g" style="left:732.12px;top:145px;color:#abb2ba">0</span><span class="g" style="left:732.12px;top:159px;color:#abb2ba">150</span><span class="g" style="left:766.88px;top:145px;color:#abb2ba">0</span><span class="g" style="left:766.88px;top:159px;color:#abb2ba">151</span><span class="g" style="left:801.62px;top:145px;color:#abb2ba">0</span><span class="g" style="left:801.62px;top:159px;color:#abb2ba">152</span><span class="g" style="left:836.38px;top:145px;color:#abb2ba">0</span><span class="g" style="left:836.38px;top:159px;color:#abb2ba">153</span><span class="g" style="left:871.12px;top:145px;color:#abb2ba">0</span><span class="g" style="left:871.12px;top:159px;color:#abb2ba">154</span><span class="g" style="left:905.88px;top:145px;color:#abb2ba">0</span><span class="g" style="left:905.88px;top:159px;color:#abb2ba">155</span><span class="g" style="left:2.38px;top:180px;color:#abb2ba">0</span><span class="g" style="left:2.38px;top:194px;color:#abb2ba">161</span><span class="g" style="left:37.12px;top:180px;color:#abb2ba">0</span><span class="g" style="left:37.12px;top:194px;color:#abb2ba">162</span><span class="g" style="left:71.88px;top:180px;color:#abb2ba">0</span><span class="g" style="left:71.88px;top:194px;color:#abb2ba">163</span><span class="g" style="left:106.62px;top:180px;color:#abb2ba">0</span><span class="g" style="left:106.62px;top:194px;color:#abb2ba">164</span><span class="g" style="left:141.38px;top:180px;color:#abb2ba">0</span><span class="g" style="left:141.38px;top:194px;color:#abb2ba">165</span><span class="g" style="left:176.12px;top:180px;color:#abb2ba">0</span><span class="g" style="left:176.12px;top:194px;color:#abb2ba">166</span><span class="g" style="left:210.88px;top:180px;color:#abb2ba">0</span><span class="g" style="left:210.88px;top:194px;color:#abb2ba">167</span><span class="g" style="left:245.62px;top:180px;color:#abb2ba">0</span><span class="g" style="left:245.62px;top:194px;color:#abb2ba">168</span><span class="g" style="left:280.38px;top:180px;color:#abb2ba">0</span><span class="g" style="left:280.38px;top:194px;color:#abb2ba">169</span><span class="g" style="left:315.12px;top:180px;color:#abb2ba">0</span><span class="g" style="left:315.12px;top:194px;color:#abb2ba">170</span><span class="g" style="left:349.88px;top:180px;color:#abb2ba">0</span><span class="g" style="left:349.88px;top:194px;color:#abb2ba">171</span><span class="g" style="left:384.62px;top:180px;color:#abb2ba">0</span><span class="g" style="left:384.62px;top:194px;color:#abb2ba">172</span><span class="g" style="left:419.38px;top:180px;color:#abb2ba">0</span><span class="g" style="left:419.38px;top:194px;color:#abb2ba">173</span><span class="g" style="left:454.12px;top:180px;color:#abb2ba">0</span><span class="g" style="left:454.12px;top:194px;color:#abb2ba">174</span><span class="g" style="left:488.88px;top:180px;color:#abb2ba">0</span><span class="g" style="left:488.88px;top:194px;color:#abb2ba">175</span><span class="g" style="left:523.62px;top:180px;color:#abb2ba">0</span><span class="g" style="left:523.62px;top:194px;color:#abb2ba">176</span><span class="g" style="left:558.38px;top:180px;color:#abb2ba">0</span><span class="g" style="left:558.38px;top:194px;color:#abb2ba">177</span><span class="g" style="left:593.12px;top:180px;color:#abb2ba">0</span><span class="g" style="left:593.12px;top:194px;color:#abb2ba">178</span><span class="g" style="left:627.88px;top:180px;color:#abb2ba">0</span><span class="g" style="left:627.88px;top:194px;color:#abb2ba">179</span><span class="g" style="left:662.62px;top:180px;color:#abb2ba">0</span><span class="g" style="left:662.62px;top:194px;color:#abb2ba">180</span><span class="g" style="left:697.38px;top:180px;color:#abb2ba">0</span><span class="g" style="left:697.38px;top:194px;color:#abb2ba">181</span><span class="g" style="left:732.12px;top:180px;color:#abb2ba">0</span><span class="g" style="left:732.12px;top:194px;color:#abb2ba">182</span><span class="g" style="left:766.88px;top:180px;color:#abb2ba">0</span><span class="g" style="left:766.88px;top:194px;color:#abb2ba">183</span><span class="g" style="left:801.62px;top:180px;color:#abb2ba">0</span><span class="g" style="left:801.62px;top:194px;color:#abb2ba">184</span><span class="g" style="left:836.38px;top:180px;color:#abb2ba">0</span><span class="g" style="left:836.38px;top:194px;color:#abb2ba">185</span><span class="g" style="left:871.12px;top:180px;color:#abb2ba">0</span><span class="g" style="left:871.12px;top:194px;color:#abb2ba">186</span><span class="g" style="left:905.88px;top:180px;color:#abb2ba">0</span><span class="g" style="left:905.88px;top:194px;color:#abb2ba">187</span><span class="g" style="left:2.38px;top:214px;color:#abb2ba">0</span><span class="g" style="left:2.38px;top:229px;color:#abb2ba">193</span><span class="g" style="left:37.12px;top:214px;color:#abb2ba">0</span><span class="g" style="left:37.12px;top:229px;color:#abb2ba">194</span><span class="g" style="left:71.88px;top:214px;color:#abb2ba">0</span><span class="g" style="left:71.88px;top:229px;color:#abb2ba">195</span><span class="g" style="left:106.62px;top:214px;color:#abb2ba">0</span><span class="g" style="left:106.62px;top:229px;color:#abb2ba">196</span><span class="g" style="left:141.38px;top:214px;color:#abb2ba">0</span><span class="g" style="left:141.38px;top:229px;color:#abb2ba">197</span><span class="g" style="left:176.12px;top:214px;color:#abb2ba">0</span><span class="g" style="left:176.12px;top:229px;color:#abb2ba">198</span><span class="g" style="left:210.88px;top:214px;color:#abb2ba">0</span><span class="g" style="left:210.88px;top:229px;color:#abb2ba">199</span><span class="g" style="left:245.62px;top:214px;color:#abb2ba">0</span><span class="g" style="left:245.62px;top:229px;color:#abb2ba">200</span><span class="g" style="left:280.38px;top:214px;color:#abb2ba">0</span><span class="g" style="left:280.38px;top:229px;color:#abb2ba">201</span><span class="g" style="left:315.12px;top:214px;color:#abb2ba">0</span><span class="g" style="left:315.12px;top:229px;color:#abb2ba">202</span><span class="g" style="left:349.88px;top:214px;color:#abb2ba">0</span><span class="g" style="left:349.88px;top:229px;color:#abb2ba">203</span><span class="g" style="left:384.62px;top:214px;color:#abb2ba">0</span><span class="g" style="left:384.62px;top:229px;color:#abb2ba">204</span><span class="g" style="left:419.38px;top:214px;color:#abb2ba">0</span><span class="g" style="left:419.38px;top:229px;color:#abb2ba">205</span><span class="g" style="left:454.12px;top:214px;color:#abb2ba">0</span><span class="g" style="left:454.12px;top:229px;color:#abb2ba">206</span><span class="g" style="left:488.88px;top:214px;color:#abb2ba">0</span><span class="g" style="left:488.88px;top:229px;color:#abb2ba">207</span><span class="g" style="left:523.62px;top:214px;color:#abb2ba">0</span><span class="g" style="left:523.62px;top:229px;color:#abb2ba">208</span><span class="g" style="left:558.38px;top:214px;color:#abb2ba">0</span><span class="g" style="left:558.38px;top:229px;color:#abb2ba">209</span><span class="g" style="left:593.12px;top:214px;color:#abb2ba">0</span><span class="g" style="left:593.12px;top:229px;color:#abb2ba">210</span><span class="g" style="left:627.88px;top:214px;color:#abb2ba">0</span><span class="g" style="left:627.88px;top:229px;color:#abb2ba">211</span><span class="g" style="left:662.62px;top:214px;color:#abb2ba">0</span><span class="g" style="left:662.62px;top:229px;color:#abb2ba">212</span><span class="g" style="left:697.38px;top:214px;color:#abb2ba">0</span><span class="g" style="left:697.38px;top:229px;color:#abb2ba">213</span><span class="g" style="left:732.12px;top:214px;color:#abb2ba">0</span><span class="g" style="left:732.12px;top:229px;color:#abb2ba">214</span><span class="g" style="left:766.88px;top:214px;color:#abb2ba">0</span><span class="g" style="left:766.88px;top:229px;color:#abb2ba">215</span><span class="g" style="left:801.62px;top:214px;color:#abb2ba">0</span><span class="g" style="left:801.62px;top:229px;color:#abb2ba">216</span><span class="g" style="left:836.38px;top:214px;color:#abb2ba">0</span><span class="g" style="left:836.38px;top:229px;color:#abb2ba">217</span><span class="g" style="left:871.12px;top:214px;color:#abb2ba">0</span><span class="g" style="left:871.12px;top:229px;color:#abb2ba">218</span><span class="g" style="left:905.88px;top:214px;color:#abb2ba">0</span><span class="g" style="left:905.88px;top:229px;color:#abb2ba">219</span><span class="g" style="left:2.38px;top:249px;color:#abb2ba">0</span><span class="g" style="left:2.38px;top:263px;color:#abb2ba">225</span><span class="g" style="left:37.12px;top:249px;color:#abb2ba">0</span><span class="g" style="left:37.12px;top:263px;color:#abb2ba">226</span><span class="g" style="left:71.88px;top:249px;color:#abb2ba">0</span><span class="g" style="left:71.88px;top:263px;color:#abb2ba">227</span><span class="g" style="left:106.62px;top:249px;color:#abb2ba">0</span><span class="g" style="left:106.62px;top:263px;color:#abb2ba">228</span><span class="g" style="left:141.38px;top:249px;color:#abb2ba">0</span><span class="g" style="left:141.38px;top:263px;color:#abb2ba">229</span><span class="g" style="left:176.12px;top:249px;color:#abb2ba">0</span><span class="g" style="left:176.12px;top:263px;color:#abb2ba">230</span><span class="g" style="left:210.88px;top:249px;color:#abb2ba">0</span><span class="g" style="left:210.88px;top:263px;color:#abb2ba">231</span><span class="g" style="left:245.62px;top:249px;color:#abb2ba">0</span><span class="g" style="left:245.62px;top:263px;color:#abb2ba">232</span><span class="g" style="left:280.38px;top:249px;color:#abb2ba">0</span><span class="g" style="left:280.38px;top:263px;color:#abb2ba">233</span><span class="g" style="left:315.12px;top:249px;color:#abb2ba">0</span><span class="g" style="left:315.12px;top:263px;color:#abb2ba">234</span><span class="g" style="left:349.88px;top:249px;color:#abb2ba">0</span><span class="g" style="left:349.88px;top:263px;color:#abb2ba">235</span><span class="g" style="left:384.62px;top:249px;color:#abb2ba">0</span><span class="g" style="left:384.62px;top:263px;color:#abb2ba">236</span><span class="g" style="left:419.38px;top:249px;color:#abb2ba">0</span><span class="g" style="left:419.38px;top:263px;color:#abb2ba">237</span><span class="g" style="left:454.12px;top:249px;color:#abb2ba">0</span><span class="g" style="left:454.12px;top:263px;color:#abb2ba">238</span><span class="g" style="left:488.88px;top:249px;color:#abb2ba">0</span><span class="g" style="left:488.88px;top:263px;color:#abb2ba">239</span><span class="g" style="left:523.62px;top:249px;color:#abb2ba">0</span><span class="g" style="left:523.62px;top:263px;color:#abb2ba">240</span><span class="g" style="left:558.38px;top:249px;color:#abb2ba">0</span><span class="g" style="left:558.38px;top:263px;color:#abb2ba">241</span><span class="g" style="left:593.12px;top:249px;color:#abb2ba">0</span><span class="g" style="left:593.12px;top:263px;color:#abb2ba">242</span><span class="g" style="left:627.88px;top:249px;color:#abb2ba">0</span><span class="g" style="left:627.88px;top:263px;color:#abb2ba">243</span><span class="g" style="left:662.62px;top:249px;color:#abb2ba">0</span><span class="g" style="left:662.62px;top:263px;color:#abb2ba">244</span><span class="g" style="left:697.38px;top:249px;color:#abb2ba">0</span><span class="g" style="left:697.38px;top:263px;color:#abb2ba">245</span><span class="g" style="left:732.12px;top:249px;color:#abb2ba">0</span><span class="g" style="left:732.12px;top:263px;color:#abb2ba">246</span><span class="g" style="left:766.88px;top:249px;color:#abb2ba">0</span><span class="g" style="left:766.88px;top:263px;color:#abb2ba">247</span><span class="g" style="left:801.62px;top:249px;color:#abb2ba">0</span><span class="g" style="left:801.62px;top:263px;color:#abb2ba">248</span><span class="g" style="left:836.38px;top:249px;color:#abb2ba">0</span><span class="g" style="left:836.38px;top:263px;color:#abb2ba">249</span><span class="g" style="left:871.12px;top:249px;color:#abb2ba">0</span><span class="g" style="left:871.12px;top:263px;color:#abb2ba">250</span><span class="g" style="left:905.88px;top:249px;color:#abb2ba">0</span><span class="g" style="left:905.88px;top:263px;color:#abb2ba">251</span><span class="g" style="left:2.38px;top:284px;color:#abb2ba">0</span><span class="g" style="left:2.38px;top:298px;color:#abb2ba">257</span><span class="g" style="left:37.12px;top:284px;color:#abb2ba">0</span><span class="g" style="left:37.12px;top:298px;color:#abb2ba">258</span><span class="g" style="left:71.88px;top:284px;color:#abb2ba">0</span><span class="g" style="left:71.88px;top:298px;color:#abb2ba">259</span><span class="g" style="left:106.62px;top:284px;color:#abb2ba">0</span><span class="g" style="left:106.62px;top:298px;color:#abb2ba">260</span><span class="g" style="left:141.38px;top:284px;color:#abb2ba">0</span><span class="g" style="left:141.38px;top:298px;color:#abb2ba">261</span><span class="g" style="left:176.12px;top:284px;color:#abb2ba">0</span><span class="g" style="left:176.12px;top:298px;color:#abb2ba">262</span><span class="g" style="left:210.88px;top:284px;color:#abb2ba">0</span><span class="g" style="left:210.88px;top:298px;color:#abb2ba">263</span><span class="g" style="left:245.62px;top:284px;color:#abb2ba">0</span><span class="g" style="left:245.62px;top:298px;color:#abb2ba">264</span><span class="g" style="left:280.38px;top:284px;color:#abb2ba">0</span><span class="g" style="left:280.38px;top:298px;color:#abb2ba">265</span><span class="g" style="left:315.12px;top:284px;color:#abb2ba">0</span><span class="g" style="left:315.12px;top:298px;color:#abb2ba">266</span><span class="g" style="left:349.88px;top:284px;color:#abb2ba">0</span><span class="g" style="left:349.88px;top:298px;color:#abb2ba">267</span><span class="g" style="left:384.62px;top:284px;color:#abb2ba">0</span><span class="g" style="left:384.62px;top:298px;color:#abb2ba">268</span><span class="g" style="left:419.38px;top:284px;color:#abb2ba">0</span><span class="g" style="left:419.38px;top:298px;color:#abb2ba">269</span><span class="g" style="left:454.12px;top:284px;color:#abb2ba">0</span><span class="g" style="left:454.12px;top:298px;color:#abb2ba">270</span><span class="g" style="left:488.88px;top:284px;color:#abb2ba">0</span><span class="g" style="left:488.88px;top:298px;color:#abb2ba">271</span><span class="g" style="left:523.62px;top:284px;color:#abb2ba">0</span><span class="g" style="left:523.62px;top:298px;color:#abb2ba">272</span><span class="g" style="left:558.38px;top:284px;color:#abb2ba">0</span><span class="g" style="left:558.38px;top:298px;color:#abb2ba">273</span><span class="g" style="left:593.12px;top:284px;color:#abb2ba">0</span><span class="g" style="left:593.12px;top:298px;color:#abb2ba">274</span><span class="g" style="left:627.88px;top:284px;color:#abb2ba">0</span><span class="g" style="left:627.88px;top:298px;color:#abb2ba">275</span><span class="g" style="left:662.62px;top:284px;color:#abb2ba">0</span><span class="g" style="left:662.62px;top:298px;color:#abb2ba">276</span><span class="g" style="left:697.38px;top:284px;color:#abb2ba">0</span><span class="g" style="left:697.38px;top:298px;color:#abb2ba">277</span><span class="g" style="left:732.12px;top:284px;color:#abb2ba">0</span><span class="g" style="left:732.12px;top:298px;color:#abb2ba">278</span><span class="g" style="left:766.88px;top:284px;color:#abb2ba">0</span><span class="g" style="left:766.88px;top:298px;color:#abb2ba">279</span><span class="g" style="left:801.62px;top:284px;color:#abb2ba">0</span><span class="g" style="left:801.62px;top:298px;color:#abb2ba">280</span><span class="g" style="left:836.38px;top:284px;color:#abb2ba">0</span><span class="g" style="left:836.38px;top:298px;color:#abb2ba">281</span><span class="g" style="left:871.12px;top:284px;color:#abb2ba">0</span><span class="g" style="left:871.12px;top:298px;color:#abb2ba">282</span><span class="g" style="left:905.88px;top:284px;color:#abb2ba">0</span><span class="g" style="left:905.88px;top:298px;color:#abb2ba">283</span><span class="g" style="left:2.38px;top:319px;color:#abb2ba">0</span><span class="g" style="left:2.38px;top:333px;color:#abb2ba">289</span><span class="g" style="left:37.12px;top:319px;color:#abb2ba">0</span><span class="g" style="left:37.12px;top:333px;color:#abb2ba">290</span><span class="g" style="left:71.88px;top:319px;color:#abb2ba">0</span><span class="g" style="left:71.88px;top:333px;color:#abb2ba">291</span><span class="g" style="left:106.62px;top:319px;color:#abb2ba">0</span><span class="g" style="left:106.62px;top:333px;color:#abb2ba">292</span><span class="g" style="left:141.38px;top:319px;color:#abb2ba">0</span><span class="g" style="left:141.38px;top:333px;color:#abb2ba">293</span><span class="g" style="left:176.12px;top:319px;color:#abb2ba">0</span><span class="g" style="left:176.12px;top:333px;color:#abb2ba">294</span><span class="g" style="left:210.88px;top:319px;color:#abb2ba">0</span><span class="g" style="left:210.88px;top:333px;color:#abb2ba">295</span><span class="g" style="left:245.62px;top:319px;color:#abb2ba">0</span><span class="g" style="left:245.62px;top:333px;color:#abb2ba">296</span><span class="g" style="left:280.38px;top:319px;color:#abb2ba">0</span><span class="g" style="left:280.38px;top:333px;color:#abb2ba">297</span><span class="g" style="left:315.12px;top:319px;color:#abb2ba">0</span><span class="g" style="left:315.12px;top:333px;color:#abb2ba">298</span><span class="g" style="left:349.88px;top:319px;color:#abb2ba">0</span><span class="g" style="left:349.88px;top:333px;color:#abb2ba">299</span><span class="g" style="left:384.62px;top:319px;color:#abb2ba">0</span><span class="g" style="left:384.62px;top:333px;color:#abb2ba">300</span><span class="g" style="left:419.38px;top:319px;color:#abb2ba">0</span><span class="g" style="left:419.38px;top:333px;color:#abb2ba">301</span><span class="g" style="left:454.12px;top:319px;color:#abb2ba">0</span><span class="g" style="left:454.12px;top:333px;color:#abb2ba">302</span><span class="g" style="left:488.88px;top:319px;color:#abb2ba">0</span><span class="g" style="left:488.88px;top:333px;color:#abb2ba">303</span><span class="g" style="left:523.62px;top:319px;color:#abb2ba">0</span><span class="g" style="left:523.62px;top:333px;color:#abb2ba">304</span><span class="g" style="left:558.38px;top:319px;color:#abb2ba">0</span><span class="g" style="left:558.38px;top:333px;color:#abb2ba">305</span><span class="g" style="left:593.12px;top:319px;color:#abb2ba">0</span><span class="g" style="left:593.12px;top:333px;color:#abb2ba">306</span><span class="g" style="left:627.88px;top:319px;color:#abb2ba">0</span><span class="g" style="left:627.88px;top:333px;color:#abb2ba">307</span><span class="g" style="left:662.62px;top:319px;color:#abb2ba">0</span><span class="g" style="left:662.62px;top:333px;color:#abb2ba">308</span><span class="g" style="left:697.38px;top:319px;color:#abb2ba">0</span><span class="g" style="left:697.38px;top:333px;color:#abb2ba">309</span><span class="g" style="left:732.12px;top:319px;color:#abb2ba">0</span><span class="g" style="left:732.12px;top:333px;color:#abb2ba">310</span><span class="g" style="left:766.88px;top:319px;color:#abb2ba">0</span><span class="g" style="left:766.88px;top:333px;color:#abb2ba">311</span><span class="g" style="left:801.62px;top:319px;color:#abb2ba">0</span><span class="g" style="left:801.62px;top:333px;color:#abb2ba">312</span><span class="g" style="left:836.38px;top:319px;color:#abb2ba">0</span><span class="g" style="left:836.38px;top:333px;color:#abb2ba">313</span><span class="g" style="left:871.12px;top:319px;color:#abb2ba">0</span><span class="g" style="left:871.12px;top:333px;color:#abb2ba">314</span><span class="g" style="left:905.88px;top:319px;color:#abb2ba">0</span><span class="g" style="left:905.88px;top:333px;color:#abb2ba">315</span><span class="g" style="left:2.38px;top:353px;color:#abb2ba">0</span><span class="g" style="left:2.38px;top:368px;color:#abb2ba">321</span><span class="g" style="left:37.12px;top:353px;color:#abb2ba">0</span><span class="g" style="left:37.12px;top:368px;color:#abb2ba">322</span><span class="g" style="left:71.88px;top:353px;color:#abb2ba">0</span><span class="g" style="left:71.88px;top:368px;color:#abb2ba">323</span><span class="g" style="left:106.62px;top:353px;color:#abb2ba">0</span><span class="g" style="left:106.62px;top:368px;color:#abb2ba">324</span><span class="g" style="left:141.38px;top:353px;color:#abb2ba">0</span><span class="g" style="left:141.38px;top:368px;color:#abb2ba">325</span><span class="g" style="left:176.12px;top:353px;color:#abb2ba">0</span><span class="g" style="left:176.12px;top:368px;color:#abb2ba">326</span><span class="g" style="left:210.88px;top:353px;color:#abb2ba">0</span><span class="g" style="left:210.88px;top:368px;color:#abb2ba">327</span><span class="g" style="left:245.62px;top:353px;color:#abb2ba">0</span><span class="g" style="left:245.62px;top:368px;color:#abb2ba">328</span><span class="g" style="left:280.38px;top:353px;color:#abb2ba">0</span><span class="g" style="left:280.38px;top:368px;color:#abb2ba">329</span><span class="g" style="left:315.12px;top:353px;color:#abb2ba">0</span><span class="g" style="left:315.12px;top:368px;color:#abb2ba">330</span><span class="g" style="left:349.88px;top:353px;color:#abb2ba">0</span><span class="g" style="left:349.88px;top:368px;color:#abb2ba">331</span><span class="g" style="left:384.62px;top:353px;color:#abb2ba">0</span><span class="g" style="left:384.62px;top:368px;color:#abb2ba">332</span><span class="g" style="left:419.38px;top:353px;color:#abb2ba">0</span><span class="g" style="left:419.38px;top:368px;color:#abb2ba">333</span><span class="g" style="left:454.12px;top:353px;color:#abb2ba">0</span><span class="g" style="left:454.12px;top:368px;color:#abb2ba">334</span><span class="g" style="left:488.88px;top:353px;color:#abb2ba">0</span><span class="g" style="left:488.88px;top:368px;color:#abb2ba">335</span><span class="g" style="left:523.62px;top:353px;color:#abb2ba">0</span><span class="g" style="left:523.62px;top:368px;color:#abb2ba">336</span><span class="g" style="left:558.38px;top:353px;color:#abb2ba">0</span><span class="g" style="left:558.38px;top:368px;color:#abb2ba">337</span><span class="g" style="left:593.12px;top:353px;color:#abb2ba">0</span><span class="g" style="left:593.12px;top:368px;color:#abb2ba">338</span><span class="g" style="left:627.88px;top:353px;color:#abb2ba">0</span><span class="g" style="left:627.88px;top:368px;color:#abb2ba">339</span><span class="g" style="left:662.62px;top:353px;color:#abb2ba">0</span><span class="g" style="left:662.62px;top:368px;color:#abb2ba">340</span><span class="g" style="left:697.38px;top:353px;color:#abb2ba">0</span><span class="g" style="left:697.38px;top:368px;color:#abb2ba">341</span><span class="g" style="left:732.12px;top:353px;color:#abb2ba">0</span><span class="g" style="left:732.12px;top:368px;color:#abb2ba">342</span><span class="g" style="left:766.88px;top:353px;color:#abb2ba">0</span><span class="g" style="left:766.88px;top:368px;color:#abb2ba">343</span><span class="g" style="left:801.62px;top:353px;color:#abb2ba">0</span><span class="g" style="left:801.62px;top:368px;color:#abb2ba">344</span><span class="g" style="left:836.38px;top:353px;color:#abb2ba">0</span><span class="g" style="left:836.38px;top:368px;color:#abb2ba">345</span><span class="g" style="left:871.12px;top:353px;color:#abb2ba">0</span><span class="g" style="left:871.12px;top:368px;color:#abb2ba">346</span><span class="g" style="left:905.88px;top:353px;color:#abb2ba">0</span><span class="g" style="left:905.88px;top:368px;color:#abb2ba">347</span><span class="g" style="left:2.38px;top:388px;color:#abb2ba">0</span><span class="g" style="left:2.38px;top:402px;color:#abb2ba">353</span><span class="g" style="left:37.12px;top:388px;color:#abb2ba">0</span><span class="g" style="left:37.12px;top:402px;color:#abb2ba">354</span><span class="g" style="left:71.88px;top:388px;color:#abb2ba">0</span><span class="g" style="left:71.88px;top:402px;color:#abb2ba">355</span><span class="g" style="left:106.62px;top:388px;color:#abb2ba">0</span><span class="g" style="left:106.62px;top:402px;color:#abb2ba">356</span><span class="g" style="left:141.38px;top:388px;color:#abb2ba">0</span><span class="g" style="left:141.38px;top:402px;color:#abb2ba">357</span><span class="g" style="left:176.12px;top:388px;color:#abb2ba">0</span><span class="g" style="left:176.12px;top:402px;color:#abb2ba">358</span><span class="g" style="left:210.88px;top:388px;color:#abb2ba">0</span><span class="g" style="left:210.88px;top:402px;color:#abb2ba">359</span><span class="g" style="left:245.62px;top:388px;color:#abb2ba">0</span><span class="g" style="left:245.62px;top:402px;color:#abb2ba">360</span><span class="g" style="left:280.38px;top:388px;color:#abb2ba">0</span><span class="g" style="left:280.38px;top:402px;color:#abb2ba">361</span><span class="g" style="left:315.12px;top:388px;color:#abb2ba">0</span><span class="g" style="left:315.12px;top:402px;color:#abb2ba">362</span><span class="g" style="left:349.88px;top:388px;color:#abb2ba">0</span><span class="g" style="left:349.88px;top:402px;color:#abb2ba">363</span><span class="g" style="left:384.62px;top:388px;color:#abb2ba">0</span><span class="g" style="left:384.62px;top:402px;color:#abb2ba">364</span><span class="g" style="left:419.38px;top:388px;color:#abb2ba">0</span><span class="g" style="left:419.38px;top:402px;color:#abb2ba">365</span><span class="g" style="left:454.12px;top:388px;color:#abb2ba">0</span><span class="g" style="left:454.12px;top:402px;color:#abb2ba">366</span><span class="g" style="left:488.88px;top:388px;color:#abb2ba">0</span><span class="g" style="left:488.88px;top:402px;color:#abb2ba">367</span><span class="g" style="left:523.62px;top:388px;color:#abb2ba">0</span><span class="g" style="left:523.62px;top:402px;color:#abb2ba">368</span><span class="g" style="left:558.38px;top:388px;color:#abb2ba">0</span><span class="g" style="left:558.38px;top:402px;color:#abb2ba">369</span><span class="g" style="left:593.12px;top:388px;color:#abb2ba">0</span><span class="g" style="left:593.12px;top:402px;color:#abb2ba">370</span><span class="g" style="left:627.88px;top:388px;color:#abb2ba">0</span><span class="g" style="left:627.88px;top:402px;color:#abb2ba">371</span><span class="g" style="left:662.62px;top:388px;color:#abb2ba">0</span><span class="g" style="left:662.62px;top:402px;color:#abb2ba">372</span><span class="g" style="left:697.38px;top:388px;color:#abb2ba">0</span><span class="g" style="left:697.38px;top:402px;color:#abb2ba">373</span><span class="g" style="left:732.12px;top:388px;color:#abb2ba">0</span><span class="g" style="left:732.12px;top:402px;color:#abb2ba">374</span><span class="g" style="left:766.88px;top:388px;color:#abb2ba">0</span><span class="g" style="left:766.88px;top:402px;color:#abb2ba">375</span><span class="g" style="left:801.62px;top:388px;color:#abb2ba">0</span><span class="g" style="left:801.62px;top:402px;color:#abb2ba">376</span><span class="g" style="left:836.38px;top:388px;color:#abb2ba">0</span><span class="g" style="left:836.38px;top:402px;color:#abb2ba">377</span><span class="g" style="left:871.12px;top:388px;color:#abb2ba">0</span><span class="g" style="left:871.12px;top:402px;color:#abb2ba">378</span><span class="g" style="left:905.88px;top:388px;color:#abb2ba">0</span><span class="g" style="left:905.88px;top:402px;color:#abb2ba">379</span><span class="g" style="left:2.38px;top:423px;color:#abb2ba">0</span><span class="g" style="left:2.38px;top:437px;color:#abb2ba">385</span><span class="g" style="left:37.12px;top:423px;color:#abb2ba">0</span><span class="g" style="left:37.12px;top:437px;color:#abb2ba">386</span><span class="g" style="left:71.88px;top:423px;color:#abb2ba">0</span><span class="g" style="left:71.88px;top:437px;color:#abb2ba">387</span><span class="g" style="left:106.62px;top:423px;color:#abb2ba">0</span><span class="g" style="left:106.62px;top:437px;color:#abb2ba">388</span><span class="g" style="left:141.38px;top:423px;color:#abb2ba">0</span><span class="g" style="left:141.38px;top:437px;color:#abb2ba">389</span><span class="g" style="left:176.12px;top:423px;color:#abb2ba">0</span><span class="g" style="left:176.12px;top:437px;color:#abb2ba">390</span><span class="g" style="left:210.88px;top:423px;color:#abb2ba">0</span><span class="g" style="left:210.88px;top:437px;color:#abb2ba">391</span><span class="g" style="left:245.62px;top:423px;color:#abb2ba">0</span><span class="g" style="left:245.62px;top:437px;color:#abb2ba">392</span><span class="g" style="left:280.38px;top:423px;color:#abb2ba">0</span><span class="g" style="left:280.38px;top:437px;color:#abb2ba">393</span><span class="g" style="left:315.12px;top:423px;color:#abb2ba">0</span><span class="g" style="left:315.12px;top:437px;color:#abb2ba">394</span><span class="g" style="left:349.88px;top:423px;color:#abb2ba">0</span><span class="g" style="left:349.88px;top:437px;color:#abb2ba">395</span><span class="g" style="left:384.62px;top:423px;color:#abb2ba">0</span><span class="g" style="left:384.62px;top:437px;color:#abb2ba">396</span><span class="g" style="left:419.38px;top:423px;color:#abb2ba">0</span><span class="g" style="left:419.38px;top:437px;color:#abb2ba">397</span><span class="g" style="left:454.12px;top:423px;color:#abb2ba">0</span><span class="g" style="left:454.12px;top:437px;color:#abb2ba">398</span><span class="g" style="left:488.88px;top:423px;color:#abb2ba">0</span><span class="g" style="left:488.88px;top:437px;color:#abb2ba">399</span><span class="g" style="left:523.62px;top:423px;color:#abb2ba">0</span><span class="g" style="left:523.62px;top:437px;color:#abb2ba">400</span><span class="g" style="left:558.38px;top:423px;color:#abb2ba">0</span><span class="g" style="left:558.38px;top:437px;color:#abb2ba">401</span><span class="g" style="left:593.12px;top:423px;color:#abb2ba">0</span><span class="g" style="left:593.12px;top:437px;color:#abb2ba">402</span><span class="g" style="left:627.88px;top:423px;color:#abb2ba">0</span><span class="g" style="left:627.88px;top:437px;color:#abb2ba">403</span><span class="g" style="left:662.62px;top:423px;color:#abb2ba">0</span><span class="g" style="left:662.62px;top:437px;color:#abb2ba">404</span><span class="g" style="left:697.38px;top:423px;color:#abb2ba">0</span><span class="g" style="left:697.38px;top:437px;color:#abb2ba">405</span><span class="g" style="left:732.12px;top:423px;color:#abb2ba">0</span><span class="g" style="left:732.12px;top:437px;color:#abb2ba">406</span><span class="g" style="left:766.88px;top:423px;color:#abb2ba">0</span><span class="g" style="left:766.88px;top:437px;color:#abb2ba">407</span><span class="g" style="left:801.62px;top:423px;color:#abb2ba">0</span><span class="g" style="left:801.62px;top:437px;color:#abb2ba">408</span><span class="g" style="left:836.38px;top:423px;color:#abb2ba">0</span><span class="g" style="left:836.38px;top:437px;color:#abb2ba">409</span><span class="g" style="left:871.12px;top:423px;color:#abb2ba">0</span><span class="g" style="left:871.12px;top:437px;color:#abb2ba">410</span><span class="g" style="left:905.88px;top:423px;color:#abb2ba">0</span><span class="g" style="left:905.88px;top:437px;color:#abb2ba">411</span><div style="left:2.5px;top:3.0px;width:77.5px;height:15px;background:#000;border-radius:4px"></div><span class="t" style="left:4.50px;top:5.00px;font-size:11px;color:#e4e7ea;letter-spacing:-0.161px;">MovingHeads</span><div style="left:245.75px;top:3.0px;width:100px;height:15px;background:#000;border-radius:4px"></div><span class="t" style="left:247.75px;top:5.00px;font-size:11px;color:#e4e7ea;letter-spacing:-0.216px;">MovingHeads_001</span><div style="left:489.0px;top:3.0px;width:100px;height:15px;background:#000;border-radius:4px"></div><span class="t" style="left:491.00px;top:5.00px;font-size:11px;color:#e4e7ea;letter-spacing:-0.216px;">MovingHeads_002</span><div style="left:732.25px;top:3.0px;width:100px;height:15px;background:#000;border-radius:4px"></div><span class="t" style="left:734.25px;top:5.00px;font-size:11px;color:#e4e7ea;letter-spacing:-0.216px;">MovingHeads_003</span><div style="left:975.5px;top:3.0px;width:100px;height:15px;background:#000;border-radius:4px"></div><span class="t" style="left:977.50px;top:5.00px;font-size:11px;color:#e4e7ea;letter-spacing:-0.216px;">MovingHeads_004</span><div style="left:106.75px;top:37.75px;width:100px;height:15px;background:#000;border-radius:4px"></div><span class="t" style="left:108.75px;top:40.00px;font-size:11px;color:#e4e7ea;letter-spacing:-0.216px;">MovingHeads_005</span><div style="left:350.0px;top:37.75px;width:100px;height:15px;background:#000;border-radius:4px"></div><span class="t" style="left:352.00px;top:40.00px;font-size:11px;color:#e4e7ea;letter-spacing:-0.216px;">MovingHeads_006</span><div style="left:593.25px;top:37.75px;width:100px;height:15px;background:#000;border-radius:4px"></div><span class="t" style="left:595.25px;top:40.00px;font-size:11px;color:#e4e7ea;letter-spacing:-0.216px;">MovingHeads_007</span></div><div style="left:928px;top:619px;width:908.5px;height:3px;background:linear-gradient(rgba(18,26,34,0),#111921 40%,#1a232d)"></div><div style="left:1839.5px;top:156px;width:7px;height:367px;background:#a97a1f;border-radius:3.5px"></div><div style="left:930px;top:623.6px;width:748px;height:7.8px;background:#a97a1f;border-radius:3.75px"></div><div style="left:928px;top:638px;width:920px;height:252px;background:#1a232d"></div><div style="left:936px;top:646px;width:859px;height:21.5px;background:#03111a;border:1px solid #37414c;border-radius:11px;box-sizing:border-box"></div><svg style="left:941px;top:648.7px;" width="14" height="14" viewBox="0 0 14 14"><circle cx="5.6" cy="5.6" r="4.3" fill="none" stroke="#c8ccd0" stroke-width="1.8"/><path d="M8.9 8.9 L12.6 12.4" stroke="#c8ccd0" stroke-width="2" stroke-linecap="round"/></svg><span class="t" style="left:962.00px;top:648.00px;font-size:13px;color:#3b4650;letter-spacing:-0.201px;">Search</span><svg style="left:1807.3px;top:649.2px;" width="14.4" height="14" viewBox="0 0 14.4 14"><path d="M2 0 H12.4 Q14.4 0 14.4 2 V12 Q14.4 14 12.4 14 H2 Q0 14 0 12 V2 Q0 0 2 0 Z M2.8 2.7 V4.2 H11.6 V2.7 Z M2.6 6.6 V8 H6 V6.6 Z M8.2 6.6 V8 H11.7 V6.6 Z M2.6 10.4 V11.8 H6 V10.4 Z M8.2 10.4 V11.8 H11.7 V10.4 Z" fill="#e4e7ea" fill-rule="evenodd"/></svg><svg style="left:1829.0px;top:647.9px;" width="17" height="17" viewBox="-8.5 -8.5 17 17"><path d="M-1.17 -5.07 L-0.39 -7.39 L0.39 -7.39 L1.17 -5.07 L1.88 -4.53 L2.76 -4.41 L4.95 -5.50 L5.50 -4.95 L4.41 -2.76 L4.53 -1.88 L5.07 -1.17 L7.39 -0.39 L7.39 0.39 L5.07 1.17 L4.53 1.88 L4.41 2.76 L5.50 4.95 L4.95 5.50 L2.76 4.41 L1.88 4.53 L1.17 5.07 L0.39 7.39 L-0.39 7.39 L-1.17 5.07 L-1.88 4.53 L-2.76 4.41 L-4.95 5.50 L-5.50 4.95 L-4.41 2.76 L-4.53 1.88 L-5.07 1.17 L-7.39 0.39 L-7.39 -0.39 L-5.07 -1.17 L-4.53 -1.88 L-4.41 -2.76 L-5.50 -4.95 L-4.95 -5.50 L-2.76 -4.41 L-1.88 -4.53 Z M3.5 0 A3.5 3.5 0 1 0 -3.5 0 A3.5 3.5 0 1 0 3.5 0 Z" fill="#dde0e3" fill-rule="evenodd" stroke="#dde0e3" stroke-width=".5" stroke-linejoin="round"/></svg><div style="left:928px;top:675px;width:908.5px;height:26px;background:#0b151d"></div><svg style="left:933.5px;top:684px;" width="10" height="7" viewBox="0 0 10 7"><path d="M.6 .8 H9.4 L5 6.4 Z" fill="#c9cdd1" stroke="#c9cdd1" stroke-width=".8" stroke-linejoin="round"/></svg><span class="t" style="left:949.50px;top:682.00px;font-size:11px;color:#d2d6da;font-weight:700;letter-spacing:-0.399px;">Fixture Patch</span><div style="left:928px;top:725.5px;width:908.5px;height:1.2px;background:#121a23"></div><div style="left:928px;top:751.5px;width:908.5px;height:1.2px;background:#121a23"></div><div style="left:928px;top:780.5px;width:908.5px;height:1.2px;background:#121a23"></div><div style="left:928px;top:806.5px;width:908.5px;height:1.2px;background:#121a23"></div><div style="left:928px;top:833.0px;width:908.5px;height:1.2px;background:#121a23"></div><div style="left:928px;top:858.5px;width:908.5px;height:1.2px;background:#121a23"></div><div style="left:928px;top:885.5px;width:908.5px;height:1.2px;background:#121a23"></div><div style="left:1289px;top:701px;width:1.2px;height:189px;background:#151e27"></div><div style="left:1789px;top:701px;width:1px;height:189px;background:#161f28"></div><div style="left:1811px;top:701px;width:1px;height:189px;background:#161f28"></div><span class="t" style="left:934.00px;top:708.00px;font-size:11px;color:#bcc2c8;letter-spacing:-0.179px;">Universe ID</span><span class="t" style="left:934.00px;top:733.00px;font-size:11px;color:#bcc2c8;letter-spacing:-0.153px;">Starting Channel</span><span class="t" style="left:934.00px;top:761.00px;font-size:11px;color:#bcc2c8;letter-spacing:0.035px;">Fixture Type</span><span class="t" style="left:934.00px;top:789.00px;font-size:11px;color:#bcc2c8;letter-spacing:-0.088px;">Active Mode Index</span><span class="t" style="left:934.00px;top:815.00px;font-size:11px;color:#bcc2c8;letter-spacing:0.000px;">Custom Tags</span><svg style="left:934.5px;top:840.5px;" width="8" height="10" viewBox="0 0 8 10"><path d="M.8 .8 V9.2 L6.8 5 Z" fill="#c9cdd1" stroke="#c9cdd1" stroke-width=".8" stroke-linejoin="round"/></svg><span class="t" style="left:949.50px;top:841.00px;font-size:11px;color:#bcc2c8;letter-spacing:-0.215px;">Editor Color</span><span class="t" style="left:934.00px;top:867.00px;font-size:11px;color:#bcc2c8;letter-spacing:-0.223px;">Receive DMXIn Editor</span><div style="left:1302px;top:704px;width:121px;height:18.5px;background:#04121b;border:1px solid #37414c;border-radius:4px;box-sizing:border-box"></div><span class="t" style="left:1310.00px;top:707.00px;font-size:11px;color:#c3c8cd;">1</span><div style="left:1302px;top:730px;width:121px;height:18.5px;background:#04121b;border:1px solid #37414c;border-radius:4px;box-sizing:border-box"></div><span class="t" style="left:1310.00px;top:733.00px;font-size:11px;color:#c3c8cd;letter-spacing:0.148px;">Multiple Values</span><div style="left:1303.5px;top:755.5px;width:137.5px;height:23px;background:#363f4a;border-radius:3px"></div><span class="t" style="left:1305.00px;top:761.00px;font-size:11px;color:#c9cdd1;letter-spacing:-0.070px;text-shadow:0 1px 0 #0a0f14">MovingHeads</span><svg style="left:1424.5px;top:763.0px;" width="10" height="7" viewBox="0 0 10 7"><path d="M1.2 1.5 L5 5.3 L8.8 1.5" fill="none" stroke="#d0d4d8" stroke-width="1.7" stroke-linecap="round" stroke-linejoin="round"/></svg><svg style="left:1447.8px;top:758.7px;" width="17" height="16" viewBox="0 0 17 16"><path d="M13.6 4.1 A6.8 6.8 0 1 0 13.6 11.9" fill="none" stroke="#a3abb3" stroke-width="1.5" stroke-linecap="round"/><path d="M15.6 8 H7.5" fill="none" stroke="#f0f2f4" stroke-width="1.7" stroke-linecap="round"/><path d="M4.6 8 L8.4 4.9 V11.1 Z" fill="#f0f2f4" stroke="#f0f2f4" stroke-width=".8" stroke-linejoin="round"/></svg><svg style="left:1474.2px;top:758.6px;" width="16.8" height="16.0" viewBox="0 0 21 20"><path d="M.3 .9 Q.3 .1 1.1 .1 H7.4 Q8 .1 8.5 .7 L10.3 3 V5 H.3 Z" fill="#f2f4f6"/><path d="M.3 4.9 H18.5 V6.4 H9.6 V16.3 H1.1 Q.3 16.3 .3 15.5 Z" fill="#f2f4f6"/><circle cx="14.4" cy="11.8" r="6.1" fill="#1a232d"/><circle cx="14.4" cy="11.8" r="4.1" fill="none" stroke="#b4bac0" stroke-width="1.9"/><path d="M11.4 15.3 L8.1 18.9" stroke="#9aa2aa" stroke-width="1.7" stroke-linecap="round"/></svg><div style="left:1302px;top:785px;width:121px;height:20px;background:#04121b;border:1px solid #37414c;border-radius:4px;box-sizing:border-box"></div><span class="t" style="left:1309.50px;top:789.00px;font-size:11px;color:#c3c8cd;letter-spacing:-0.258px;">Mode</span><svg style="left:1400.5px;top:791.5px;" width="10" height="7" viewBox="0 0 10 7"><path d="M1.2 1.5 L5 5.3 L8.8 1.5" fill="none" stroke="#d0d4d8" stroke-width="1.7" stroke-linecap="round" stroke-linejoin="round"/></svg><span class="t" style="left:1302.00px;top:815.00px;font-size:11px;color:#bcc2c8;letter-spacing:-0.036px;">0 Array element</span><svg style="left:1423px;top:813.5px;" width="15" height="15" viewBox="0 0 15 15"><circle cx="7.5" cy="7.5" r="6.4" fill="none" stroke="#dfe2e5" stroke-width="1.4"/><path d="M7.5 4.6 V10.4 M4.6 7.5 H10.4" stroke="#dfe2e5" stroke-width="1.6" stroke-linecap="round"/></svg><svg style="left:1448px;top:812.5px;" width="14" height="16" viewBox="0 0 14 16"><path d="M1 3.6 H13 M5 1.4 H9" stroke="#dfe2e5" stroke-width="1.7" stroke-linecap="round"/><path d="M2.8 5.6 V13 Q2.8 14.6 4.4 14.6 H9.6 Q11.2 14.6 11.2 13 V5.6" fill="none" stroke="#dfe2e5" stroke-width="1.8"/></svg><div style="left:1302.5px;top:837.5px;width:115.5px;height:19.5px;background:#c6f432;border-radius:4px"></div><div style="left:1302px;top:865px;width:17px;height:16.5px;background:#04121b;border:1px solid #37414c;border-radius:3px;box-sizing:border-box"></div><svg style="left:1818px;top:734.5px;" width="13" height="11" viewBox="0 0 13 11"><path d="M4.6 1.2 L1.4 4.2 L4.6 7.2 M1.8 4.2 H8.2 Q11.6 4.2 11.6 7.2 Q11.6 9.6 9.4 9.8" fill="none" stroke="#c9cdd1" stroke-width="1.6" stroke-linecap="round" stroke-linejoin="round"/></svg><svg style="left:1818px;top:761.5px;" width="13" height="11" viewBox="0 0 13 11"><path d="M4.6 1.2 L1.4 4.2 L4.6 7.2 M1.8 4.2 H8.2 Q11.6 4.2 11.6 7.2 Q11.6 9.6 9.4 9.8" fill="none" stroke="#c9cdd1" stroke-width="1.6" stroke-linecap="round" stroke-linejoin="round"/></svg><svg style="left:1818px;top:842px;" width="13" height="11" viewBox="0 0 13 11"><path d="M4.6 1.2 L1.4 4.2 L4.6 7.2 M1.8 4.2 H8.2 Q11.6 4.2 11.6 7.2 Q11.6 9.6 9.4 9.8" fill="none" stroke="#c9cdd1" stroke-width="1.6" stroke-linecap="round" stroke-linejoin="round"/></svg><div style="left:1838px;top:677px;width:7.5px;height:220px;background:#a97a1f;border-radius:3.75px"></div>
</div></body></html>
